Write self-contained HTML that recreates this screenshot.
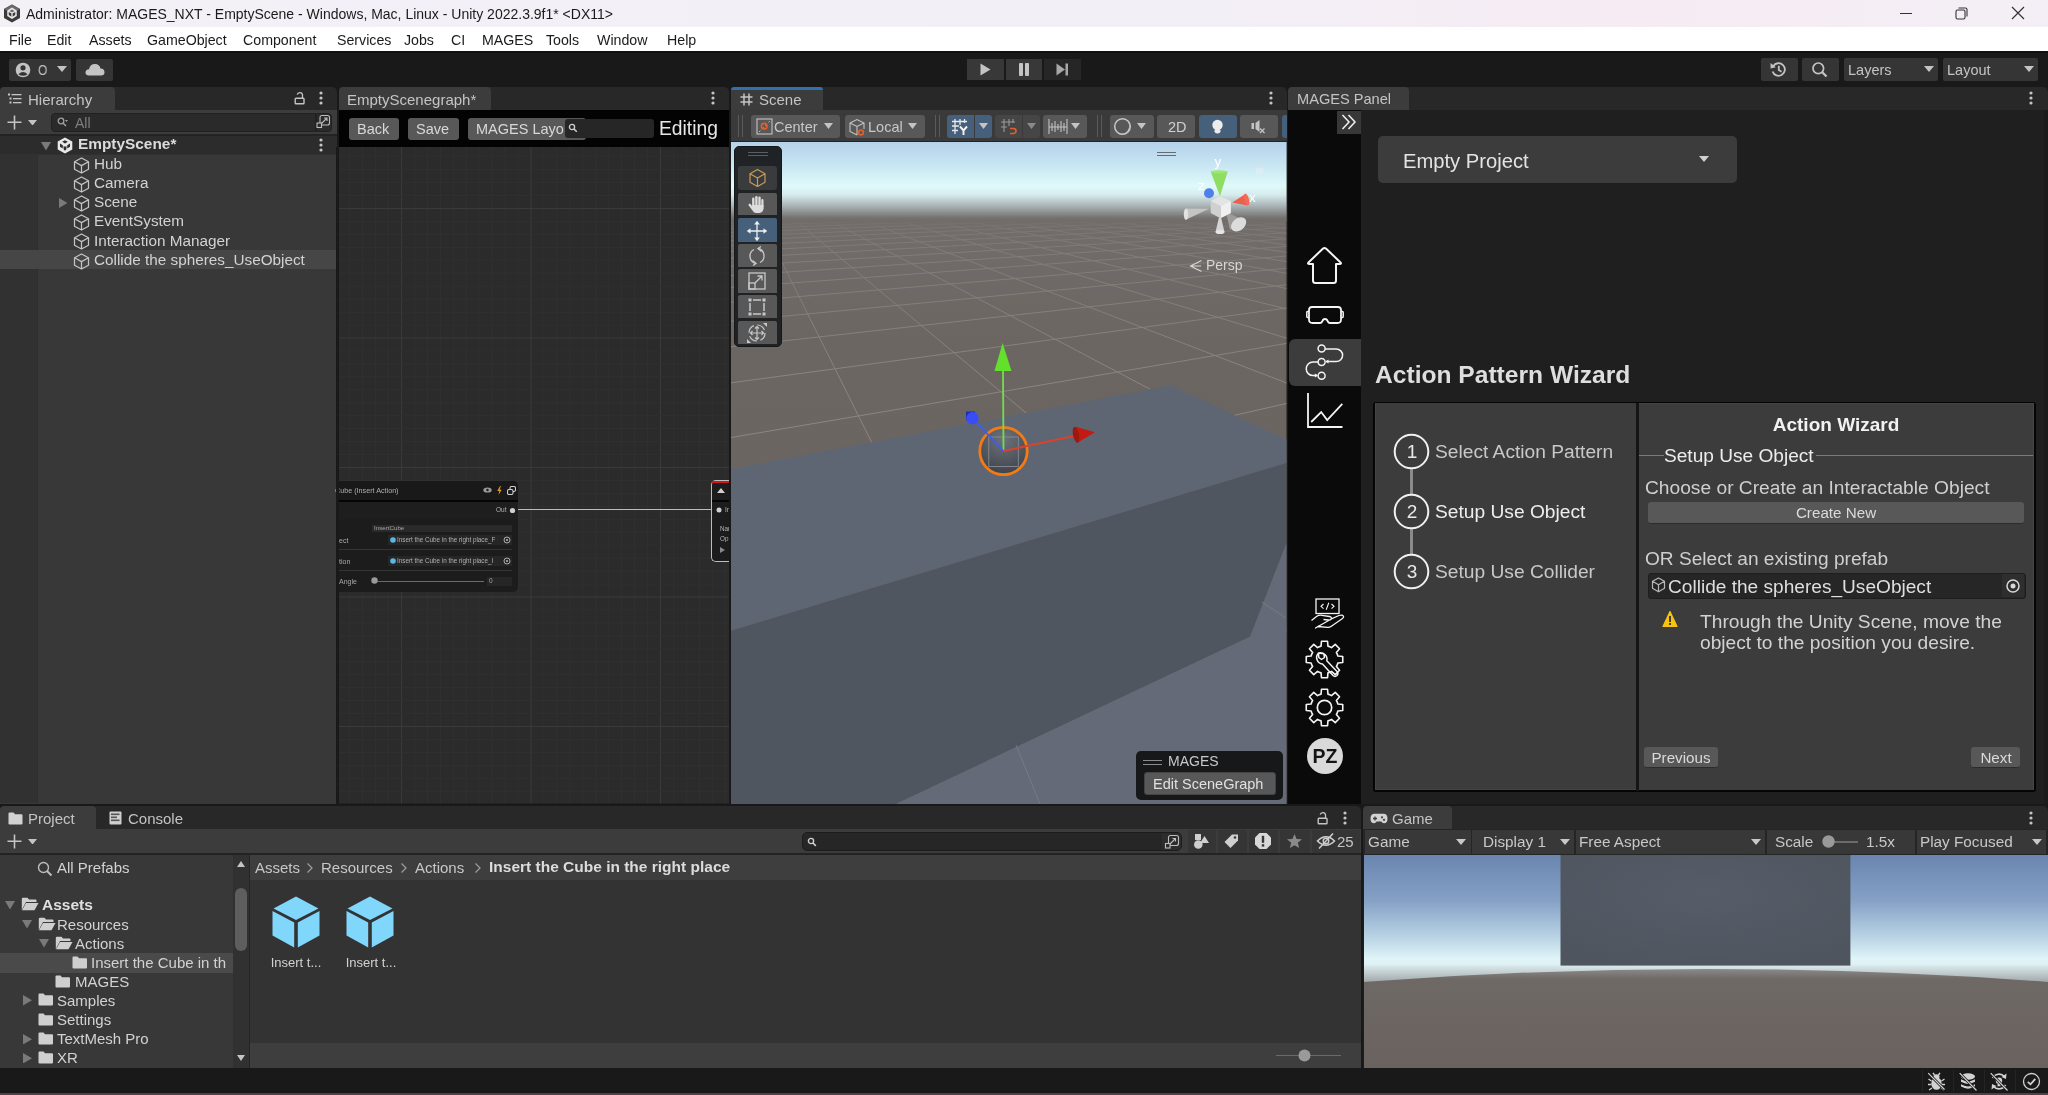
<!DOCTYPE html><html><head><meta charset="utf-8"><style>
html,body{margin:0;padding:0;width:2048px;height:1095px;overflow:hidden;background:#191919;}
body{position:relative;font-family:"Liberation Sans",sans-serif;}
div{position:absolute;box-sizing:border-box;}
.t{white-space:nowrap;line-height:1;will-change:transform;}
</style></head><body>
<div style="left:0;top:0;width:2048px;height:27px;background:linear-gradient(90deg,#f3f0f6 0%,#f3eff6 60%,#f6ebf3 80%,#f4eff6 100%);"></div>
<svg style="position:absolute;left:3px;top:4px;" width="18" height="19" viewBox="0 0 18 19"><polygon points="9,0.5 17,5 17,14 9,18.5 1,14 1,5" fill="#3a3a3a"/><polygon points="9,0.5 17,5 9,9.5 1,5" fill="#6a6a6a"/><path d="M9 4.5 L13 7 L13 11.5 L9 14 L5 11.5 L5 7 Z" fill="none" stroke="#e8e8e8" stroke-width="1.5"/><path d="M9 9 L9 14 M9 9 L13 7 M9 9 L5 7" stroke="#e8e8e8" stroke-width="1.3"/></svg>
<div class="t" style="left:26px;top:7.45px;font-size:14px;color:#1a1a1a;font-weight:400;">Administrator: MAGES_NXT - EmptyScene - Windows, Mac, Linux - Unity 2022.3.9f1* &lt;DX11&gt;</div>
<div style="left:1900px;top:13px;width:12px;height:1px;background:#333;"></div>
<svg style="position:absolute;left:1955px;top:7px;" width="13" height="13" viewBox="0 0 13 13"><rect x="1" y="3" width="9" height="9" rx="1.5" fill="none" stroke="#333" stroke-width="1.1"/><path d="M3.5 1 H10.5 Q12 1 12 2.5 V9.5" fill="none" stroke="#333" stroke-width="1.1"/></svg>
<svg style="position:absolute;left:2011px;top:6px;" width="14" height="14" viewBox="0 0 14 14"><path d="M1 1 L13 13 M13 1 L1 13" stroke="#333" stroke-width="1.2"/></svg>
<div style="left:0px;top:27px;width:2048px;height:24px;background:#ffffff;"></div>
<div class="t" style="left:9px;top:32.78px;font-size:14.2px;color:#1a1a1a;font-weight:400;">File</div>
<div class="t" style="left:47px;top:32.78px;font-size:14.2px;color:#1a1a1a;font-weight:400;">Edit</div>
<div class="t" style="left:89px;top:32.78px;font-size:14.2px;color:#1a1a1a;font-weight:400;">Assets</div>
<div class="t" style="left:147px;top:32.78px;font-size:14.2px;color:#1a1a1a;font-weight:400;">GameObject</div>
<div class="t" style="left:243px;top:32.78px;font-size:14.2px;color:#1a1a1a;font-weight:400;">Component</div>
<div class="t" style="left:337px;top:32.78px;font-size:14.2px;color:#1a1a1a;font-weight:400;">Services</div>
<div class="t" style="left:404px;top:32.78px;font-size:14.2px;color:#1a1a1a;font-weight:400;">Jobs</div>
<div class="t" style="left:451px;top:32.78px;font-size:14.2px;color:#1a1a1a;font-weight:400;">CI</div>
<div class="t" style="left:482px;top:32.78px;font-size:14.2px;color:#1a1a1a;font-weight:400;">MAGES</div>
<div class="t" style="left:546px;top:32.78px;font-size:14.2px;color:#1a1a1a;font-weight:400;">Tools</div>
<div class="t" style="left:597px;top:32.78px;font-size:14.2px;color:#1a1a1a;font-weight:400;">Window</div>
<div class="t" style="left:667px;top:32.78px;font-size:14.2px;color:#1a1a1a;font-weight:400;">Help</div>
<div style="left:0px;top:51px;width:2048px;height:2px;background:#101010;"></div>
<div style="left:0px;top:53px;width:2048px;height:34px;background:#191919;"></div>
<div style="left:9px;top:59px;width:62px;height:22px;background:#353535;border-radius:2px;"></div>
<svg style="position:absolute;left:15px;top:62px;" width="16" height="16" viewBox="0 0 16 16"><circle cx="8" cy="8" r="7.3" fill="#c4c4c4"/><circle cx="8" cy="5.8" r="2.6" fill="#353535"/><path d="M3.4 12.2 Q8 7.8 12.6 12.2 Q8 15.5 3.4 12.2Z" fill="#353535"/></svg>
<div class="t" style="left:38px;top:63.15px;font-size:14px;color:#c4c4c4;font-weight:400;transform:scaleX(0.85);transform-origin:left;">O</div>
<svg style="position:absolute;left:57.0px;top:66.0px;" width="10" height="6" viewBox="0 0 10 6"><polygon points="0,0 10,0 5.0,6" fill="#c4c4c4"/></svg>
<div style="left:76px;top:59px;width:37px;height:22px;background:#353535;border-radius:2px;"></div>
<svg style="position:absolute;left:85px;top:63px;" width="20" height="13" viewBox="0 0 20 13"><path d="M4 12.5 Q0.5 12.5 0.5 9.5 Q0.5 6.5 4 6.3 Q5 1 10 1 Q14.5 1 15.5 5.5 Q19.5 5.8 19.5 9.2 Q19.5 12.5 16 12.5 Z" fill="#c4c4c4"/></svg>
<div style="left:967px;top:59px;width:37px;height:21px;background:#383838;"></div>
<svg style="position:absolute;left:980px;top:63px;" width="11" height="13" viewBox="0 0 11 13"><polygon points="0.5,0.5 10.5,6.5 0.5,12.5" fill="#c4c4c4"/></svg>
<div style="left:1006px;top:59px;width:36px;height:21px;background:#383838;"></div>
<div style="left:1019px;top:63px;width:4px;height:13px;background:#c4c4c4;border-radius:1px;"></div>
<div style="left:1025px;top:63px;width:4px;height:13px;background:#c4c4c4;border-radius:1px;"></div>
<div style="left:1044px;top:59px;width:37px;height:21px;background:#262626;"></div>
<svg style="position:absolute;left:1056px;top:63px;" width="13" height="13" viewBox="0 0 13 13"><polygon points="0.5,0.5 9,6.5 0.5,12.5" fill="#a8a8a8"/><rect x="9.5" y="0.5" width="2.5" height="12" fill="#a8a8a8"/></svg>
<div style="left:1761px;top:58px;width:37px;height:23px;background:#353535;border-radius:2px;"></div>
<svg style="position:absolute;left:1770px;top:61px;" width="17" height="17" viewBox="0 0 17 17"><path d="M3.2 5.2 A6.3 6.3 0 1 1 2.6 10.5" fill="none" stroke="#c4c4c4" stroke-width="1.8"/><polygon points="0.5,2 5.8,6.2 0.6,7.6" fill="#c4c4c4"/><path d="M8.8 4.8 V9 L11.5 10.8" fill="none" stroke="#c4c4c4" stroke-width="1.8"/></svg>
<div style="left:1802px;top:58px;width:37px;height:23px;background:#353535;border-radius:2px;"></div>
<svg style="position:absolute;left:1811px;top:61px;" width="18" height="18" viewBox="0 0 18 18"><circle cx="7.3" cy="7.3" r="5.3" fill="none" stroke="#c4c4c4" stroke-width="1.7"/><path d="M11 11 L15.5 15.5" stroke="#c4c4c4" stroke-width="2.3"/></svg>
<div style="left:1844px;top:58px;width:94px;height:23px;background:#353535;border-radius:2px;"></div>
<div class="t" style="left:1848px;top:62.73px;font-size:14.5px;color:#c4c4c4;font-weight:400;">Layers</div>
<svg style="position:absolute;left:1924.0px;top:66.0px;" width="10" height="6" viewBox="0 0 10 6"><polygon points="0,0 10,0 5.0,6" fill="#c4c4c4"/></svg>
<div style="left:1943px;top:58px;width:95px;height:23px;background:#353535;border-radius:2px;"></div>
<div class="t" style="left:1947px;top:62.73px;font-size:14.5px;color:#c4c4c4;font-weight:400;">Layout</div>
<svg style="position:absolute;left:2024.0px;top:66.0px;" width="10" height="6" viewBox="0 0 10 6"><polygon points="0,0 10,0 5.0,6" fill="#c4c4c4"/></svg>
<div style="left:0px;top:1068px;width:2048px;height:25px;background:#191919;"></div>
<div style="left:0px;top:1093px;width:2048px;height:2px;background:#4c4247;"></div>
<div style="left:0px;top:87px;width:337px;height:23px;background:#282828;border-radius:5px 5px 0 0;"></div>
<div style="left:0px;top:87px;width:115px;height:23px;background:#3c3c3c;border-radius:4px 4px 0 0;"></div>
<svg style="position:absolute;left:8px;top:93px;" width="14" height="12" viewBox="0 0 14 12"><rect x="0" y="0.5" width="2" height="2" fill="#c4c4c4"/><rect x="3.5" y="1" width="10" height="1.3" fill="#c4c4c4"/><rect x="1.5" y="4.5" width="2" height="2" fill="#c4c4c4"/><rect x="5" y="5" width="8.5" height="1.3" fill="#c4c4c4"/><rect x="1.5" y="8.5" width="2" height="2" fill="#c4c4c4"/><rect x="5" y="9" width="8.5" height="1.3" fill="#c4c4c4"/></svg>
<div class="t" style="left:27.5px;top:91.90px;font-size:15px;color:#c4c4c4;font-weight:400;">Hierarchy</div>
<svg style="position:absolute;left:294px;top:91px;" width="12" height="14" viewBox="0 0 12 14"><path d="M8.5 7 V4 A2.7 2.7 0 0 0 3.2 3.6" fill="none" stroke="#c4c4c4" stroke-width="1.3"/><rect x="1.2" y="7.2" width="8.8" height="5.6" rx="0.8" fill="none" stroke="#c4c4c4" stroke-width="1.4"/></svg>
<svg style="position:absolute;left:318px;top:91px;" width="6" height="14" viewBox="0 0 6 14"><circle cx="3" cy="2" r="1.6" fill="#c4c4c4"/><circle cx="3" cy="7" r="1.6" fill="#c4c4c4"/><circle cx="3" cy="12" r="1.6" fill="#c4c4c4"/></svg>
<div style="left:0px;top:110px;width:337px;height:24px;background:#3c3c3c;"></div>
<svg style="position:absolute;left:7px;top:115px;" width="16" height="15" viewBox="0 0 16 15"><path d="M7.5 0.5 V14.5 M0.5 7.2 H14.5" stroke="#c4c4c4" stroke-width="1.6"/></svg>
<svg style="position:absolute;left:27.5px;top:119.75px;" width="9" height="5.5" viewBox="0 0 9 5.5"><polygon points="0,0 9,0 4.5,5.5" fill="#c4c4c4"/></svg>
<div style="left:51px;top:113px;width:265px;height:19px;background:#2a2a2a;border-radius:4px 0 0 4px;border:1px solid #212121;"></div>
<div style="left:316px;top:113px;width:16px;height:19px;background:#2a2a2a;border-radius:0 4px 4px 0;border:1px solid #212121;"></div>
<svg style="position:absolute;left:57px;top:117px;" width="11" height="11" viewBox="0 0 11 11"><circle cx="4" cy="4" r="2.8" fill="none" stroke="#a0a0a0" stroke-width="1.3"/><path d="M6 6 L9 9" stroke="#a0a0a0" stroke-width="1.5"/><polygon points="8,3 11,3 9.5,5" fill="#a0a0a0"/></svg>
<div class="t" style="left:75px;top:115.75px;font-size:14px;color:#7f7f7f;font-weight:400;">All</div>
<svg style="position:absolute;left:316px;top:114px;" width="15" height="15" viewBox="0 0 15 15"><rect x="4" y="1.5" width="9.5" height="9.5" rx="2" fill="none" stroke="#bdbdbd" stroke-width="1.1"/><path d="M5 10 L11 4 M8 4 H11 V7" fill="none" stroke="#bdbdbd" stroke-width="1.1"/><rect x="1" y="9" width="4.5" height="4.5" fill="#2a2a2a" stroke="#bdbdbd" stroke-width="1.1"/></svg>
<div style="left:0px;top:134px;width:337px;height:1.5px;background:#232323;"></div>
<div style="left:0px;top:135.5px;width:337px;height:668px;background:#383838;"></div>
<div style="left:0px;top:154.2px;width:37.5px;height:649.3px;background:#313131;"></div>
<div style="left:37px;top:154.2px;width:1.2px;height:649.3px;background:#2e2e2e;"></div>
<div style="left:0px;top:135.5px;width:337px;height:19px;background:#2c2c2c;"></div>
<div style="left:0px;top:154px;width:337px;height:0.8px;background:#303030;"></div>
<svg style="position:absolute;left:40.7px;top:141.75px;" width="10" height="8.5" viewBox="0 0 10 8.5"><polygon points="0,0 10,0 5.0,8.5" fill="#7a7a7a"/></svg>
<svg style="position:absolute;left:57px;top:137px;" width="16" height="17" viewBox="0 0 16 17"><path d="M8 0.5 L15.3 4.6 V12.4 L8 16.5 L0.7 12.4 V4.6 Z" fill="#e8e8e8"/><path d="M8 3.2 L5.2 4.8 L8 6.4 L10.8 4.8 Z M3 6.6 V9.8 L5.8 11.4 V8.2 Z M13 6.6 V9.8 L10.2 11.4 V8.2 Z M6.6 12.2 L8 13.8 L9.4 12.2 V9 L8 9.8 L6.6 9 Z" fill="#2c2c2c"/></svg>
<div class="t" style="left:77.8px;top:136.26px;font-size:15.4px;color:#dcdcdc;font-weight:700;">EmptyScene*</div>
<svg style="position:absolute;left:318px;top:138px;" width="6" height="14" viewBox="0 0 6 14"><circle cx="3" cy="2" r="1.6" fill="#c4c4c4"/><circle cx="3" cy="7" r="1.6" fill="#c4c4c4"/><circle cx="3" cy="12" r="1.6" fill="#c4c4c4"/></svg>
<svg style="position:absolute;left:72.5px;top:156.5px;" width="17" height="17" viewBox="0 0 17 17"><path d="M8.5 1 L15.5 4.8 V12.2 L8.5 16 L1.5 12.2 V4.8 Z M1.5 4.8 L8.5 8.6 L15.5 4.8 M8.5 8.6 V16" fill="none" stroke="#c4c4c4" stroke-width="1.25" stroke-linejoin="round"/></svg>
<div class="t" style="left:93.8px;top:155.85px;font-size:15.3px;color:#d2d2d2;font-weight:400;">Hub</div>
<svg style="position:absolute;left:72.5px;top:175.7px;" width="17" height="17" viewBox="0 0 17 17"><path d="M8.5 1 L15.5 4.8 V12.2 L8.5 16 L1.5 12.2 V4.8 Z M1.5 4.8 L8.5 8.6 L15.5 4.8 M8.5 8.6 V16" fill="none" stroke="#c4c4c4" stroke-width="1.25" stroke-linejoin="round"/></svg>
<div class="t" style="left:93.8px;top:175.05px;font-size:15.3px;color:#d2d2d2;font-weight:400;">Camera</div>
<svg style="position:absolute;left:72.5px;top:194.9px;" width="17" height="17" viewBox="0 0 17 17"><path d="M8.5 1 L15.5 4.8 V12.2 L8.5 16 L1.5 12.2 V4.8 Z M1.5 4.8 L8.5 8.6 L15.5 4.8 M8.5 8.6 V16" fill="none" stroke="#c4c4c4" stroke-width="1.25" stroke-linejoin="round"/></svg>
<div class="t" style="left:93.8px;top:194.25px;font-size:15.3px;color:#d2d2d2;font-weight:400;">Scene</div>
<svg style="position:absolute;left:72.5px;top:214.1px;" width="17" height="17" viewBox="0 0 17 17"><path d="M8.5 1 L15.5 4.8 V12.2 L8.5 16 L1.5 12.2 V4.8 Z M1.5 4.8 L8.5 8.6 L15.5 4.8 M8.5 8.6 V16" fill="none" stroke="#c4c4c4" stroke-width="1.25" stroke-linejoin="round"/></svg>
<div class="t" style="left:93.8px;top:213.45px;font-size:15.3px;color:#d2d2d2;font-weight:400;">EventSystem</div>
<svg style="position:absolute;left:72.5px;top:233.3px;" width="17" height="17" viewBox="0 0 17 17"><path d="M8.5 1 L15.5 4.8 V12.2 L8.5 16 L1.5 12.2 V4.8 Z M1.5 4.8 L8.5 8.6 L15.5 4.8 M8.5 8.6 V16" fill="none" stroke="#c4c4c4" stroke-width="1.25" stroke-linejoin="round"/></svg>
<div class="t" style="left:93.8px;top:232.65px;font-size:15.3px;color:#d2d2d2;font-weight:400;">Interaction Manager</div>
<div style="left:0px;top:250.2px;width:337px;height:19.2px;background:#464646;"></div>
<svg style="position:absolute;left:72.5px;top:252.5px;" width="17" height="17" viewBox="0 0 17 17"><path d="M8.5 1 L15.5 4.8 V12.2 L8.5 16 L1.5 12.2 V4.8 Z M1.5 4.8 L8.5 8.6 L15.5 4.8 M8.5 8.6 V16" fill="none" stroke="#c4c4c4" stroke-width="1.25" stroke-linejoin="round"/></svg>
<div class="t" style="left:93.8px;top:251.85px;font-size:15.3px;color:#d2d2d2;font-weight:400;">Collide the spheres_UseObject</div>
<svg style="position:absolute;left:58.75px;top:197.8px;" width="8.5" height="10" viewBox="0 0 8.5 10"><polygon points="0,0 8.5,5.0 0,10" fill="#7a7a7a"/></svg>
<div style="left:337px;top:87px;width:2px;height:717px;background:#191919;"></div>
<div style="left:339px;top:87px;width:390px;height:23px;background:#282828;border-radius:5px 5px 0 0;"></div>
<div style="left:339px;top:87px;width:152px;height:23px;background:#3c3c3c;border-radius:4px 4px 0 0;"></div>
<div class="t" style="left:347px;top:91.90px;font-size:15px;color:#c4c4c4;font-weight:400;">EmptyScenegraph*</div>
<svg style="position:absolute;left:710px;top:91px;" width="6" height="14" viewBox="0 0 6 14"><circle cx="3" cy="2" r="1.6" fill="#c4c4c4"/><circle cx="3" cy="7" r="1.6" fill="#c4c4c4"/><circle cx="3" cy="12" r="1.6" fill="#c4c4c4"/></svg>
<div style="left:339px;top:110px;width:390px;height:37px;background:#030303;"></div>
<div style="left:349px;top:117.5px;width:50px;height:22.5px;background:#585858;border-radius:3px;"></div>
<div class="t" style="left:357px;top:121.73px;font-size:14.5px;color:#d8d8d8;font-weight:400;">Back</div>
<div style="left:407.5px;top:117.5px;width:51px;height:22.5px;background:#585858;border-radius:3px;"></div>
<div class="t" style="left:416px;top:121.73px;font-size:14.5px;color:#d8d8d8;font-weight:400;">Save</div>
<div style="left:468px;top:117.5px;width:118px;height:22.5px;background:#585858;border-radius:3px;"></div>
<div class="t" style="left:476px;top:121.73px;font-size:14.5px;color:#d8d8d8;font-weight:400;">MAGES Layo</div>
<div style="left:564.5px;top:119px;width:89.5px;height:19px;background:#262626;border-radius:3px;"></div>
<svg style="position:absolute;left:568px;top:123px;" width="10" height="10" viewBox="0 0 10 10"><circle cx="4" cy="4" r="2.6" fill="none" stroke="#cfcfcf" stroke-width="1.3"/><path d="M6 6 L8.8 8.8" stroke="#cfcfcf" stroke-width="1.6"/></svg>
<div class="t" style="left:659px;top:118.86px;font-size:19.3px;color:#e6e6e6;font-weight:400;">Editing</div>
<svg style="position:absolute;left:339px;top:147px;" width="390" height="656.5" viewBox="0 0 390 656.5"><rect width="390" height="656.5" fill="#2b2b2b"/><rect x="10.20" y="0" width="1" height="656.5" fill="#303030"/><rect x="23.15" y="0" width="1" height="656.5" fill="#303030"/><rect x="36.10" y="0" width="1" height="656.5" fill="#303030"/><rect x="49.05" y="0" width="1" height="656.5" fill="#303030"/><rect x="62.00" y="0" width="1" height="656.5" fill="#3a3a3a"/><rect x="74.95" y="0" width="1" height="656.5" fill="#303030"/><rect x="87.90" y="0" width="1" height="656.5" fill="#303030"/><rect x="100.85" y="0" width="1" height="656.5" fill="#303030"/><rect x="113.80" y="0" width="1" height="656.5" fill="#303030"/><rect x="126.75" y="0" width="1" height="656.5" fill="#303030"/><rect x="139.70" y="0" width="1" height="656.5" fill="#303030"/><rect x="152.65" y="0" width="1" height="656.5" fill="#303030"/><rect x="165.60" y="0" width="1" height="656.5" fill="#303030"/><rect x="178.55" y="0" width="1" height="656.5" fill="#303030"/><rect x="191.50" y="0" width="1" height="656.5" fill="#3a3a3a"/><rect x="204.45" y="0" width="1" height="656.5" fill="#303030"/><rect x="217.40" y="0" width="1" height="656.5" fill="#303030"/><rect x="230.35" y="0" width="1" height="656.5" fill="#303030"/><rect x="243.30" y="0" width="1" height="656.5" fill="#303030"/><rect x="256.25" y="0" width="1" height="656.5" fill="#303030"/><rect x="269.20" y="0" width="1" height="656.5" fill="#303030"/><rect x="282.15" y="0" width="1" height="656.5" fill="#303030"/><rect x="295.10" y="0" width="1" height="656.5" fill="#303030"/><rect x="308.05" y="0" width="1" height="656.5" fill="#303030"/><rect x="321.00" y="0" width="1" height="656.5" fill="#3a3a3a"/><rect x="333.95" y="0" width="1" height="656.5" fill="#303030"/><rect x="346.90" y="0" width="1" height="656.5" fill="#303030"/><rect x="359.85" y="0" width="1" height="656.5" fill="#303030"/><rect x="372.80" y="0" width="1" height="656.5" fill="#303030"/><rect x="385.75" y="0" width="1" height="656.5" fill="#303030"/><rect x="0" y="9.20" width="390" height="1" fill="#303030"/><rect x="0" y="22.15" width="390" height="1" fill="#303030"/><rect x="0" y="35.10" width="390" height="1" fill="#303030"/><rect x="0" y="48.05" width="390" height="1" fill="#303030"/><rect x="0" y="61.00" width="390" height="1" fill="#3a3a3a"/><rect x="0" y="73.95" width="390" height="1" fill="#303030"/><rect x="0" y="86.90" width="390" height="1" fill="#303030"/><rect x="0" y="99.85" width="390" height="1" fill="#303030"/><rect x="0" y="112.80" width="390" height="1" fill="#303030"/><rect x="0" y="125.75" width="390" height="1" fill="#303030"/><rect x="0" y="138.70" width="390" height="1" fill="#303030"/><rect x="0" y="151.65" width="390" height="1" fill="#303030"/><rect x="0" y="164.60" width="390" height="1" fill="#303030"/><rect x="0" y="177.55" width="390" height="1" fill="#303030"/><rect x="0" y="190.50" width="390" height="1" fill="#3a3a3a"/><rect x="0" y="203.45" width="390" height="1" fill="#303030"/><rect x="0" y="216.40" width="390" height="1" fill="#303030"/><rect x="0" y="229.35" width="390" height="1" fill="#303030"/><rect x="0" y="242.30" width="390" height="1" fill="#303030"/><rect x="0" y="255.25" width="390" height="1" fill="#303030"/><rect x="0" y="268.20" width="390" height="1" fill="#303030"/><rect x="0" y="281.15" width="390" height="1" fill="#303030"/><rect x="0" y="294.10" width="390" height="1" fill="#303030"/><rect x="0" y="307.05" width="390" height="1" fill="#303030"/><rect x="0" y="320.00" width="390" height="1" fill="#3a3a3a"/><rect x="0" y="332.95" width="390" height="1" fill="#303030"/><rect x="0" y="345.90" width="390" height="1" fill="#303030"/><rect x="0" y="358.85" width="390" height="1" fill="#303030"/><rect x="0" y="371.80" width="390" height="1" fill="#303030"/><rect x="0" y="384.75" width="390" height="1" fill="#303030"/><rect x="0" y="397.70" width="390" height="1" fill="#303030"/><rect x="0" y="410.65" width="390" height="1" fill="#303030"/><rect x="0" y="423.60" width="390" height="1" fill="#303030"/><rect x="0" y="436.55" width="390" height="1" fill="#303030"/><rect x="0" y="449.50" width="390" height="1" fill="#3a3a3a"/><rect x="0" y="462.45" width="390" height="1" fill="#303030"/><rect x="0" y="475.40" width="390" height="1" fill="#303030"/><rect x="0" y="488.35" width="390" height="1" fill="#303030"/><rect x="0" y="501.30" width="390" height="1" fill="#303030"/><rect x="0" y="514.25" width="390" height="1" fill="#303030"/><rect x="0" y="527.20" width="390" height="1" fill="#303030"/><rect x="0" y="540.15" width="390" height="1" fill="#303030"/><rect x="0" y="553.10" width="390" height="1" fill="#303030"/><rect x="0" y="566.05" width="390" height="1" fill="#303030"/><rect x="0" y="579.00" width="390" height="1" fill="#3a3a3a"/><rect x="0" y="591.95" width="390" height="1" fill="#303030"/><rect x="0" y="604.90" width="390" height="1" fill="#303030"/><rect x="0" y="617.85" width="390" height="1" fill="#303030"/><rect x="0" y="630.80" width="390" height="1" fill="#303030"/><rect x="0" y="643.75" width="390" height="1" fill="#303030"/></svg>
<div style="left:339px;top:480.7px;width:179px;height:111px;background:#1c1c1c;border-radius:0 5px 5px 0;"></div>
<div style="left:339px;top:480.7px;width:179px;height:19px;background:#191919;border-radius:0 5px 0 0;"></div>
<div style="left:339px;top:499.5px;width:179px;height:2px;background:#050505;"></div>
<div style="left:339px;top:501.5px;width:179px;height:17.5px;background:#1e1e1e;"></div>
<div class="t" style="left:339px;top:486.61px;font-size:7.2px;color:#b0b0b0;font-weight:400;margin-left:-4px;">Cube (Insert Action)</div>
<svg style="position:absolute;left:483px;top:487px;" width="9" height="6" viewBox="0 0 9 6"><ellipse cx="4.5" cy="3" rx="4.2" ry="2.6" fill="#9a9a9a"/><circle cx="4.5" cy="3" r="1.2" fill="#1c1c1c"/></svg>
<svg style="position:absolute;left:496.5px;top:485.5px;" width="5" height="9" viewBox="0 0 5 9"><polygon points="3,0 0.3,5 2.3,5 1.5,9 4.7,3.8 2.7,3.8 3.8,0" fill="#e59a23"/></svg>
<svg style="position:absolute;left:507px;top:485.5px;" width="9" height="9" viewBox="0 0 9 9"><rect x="3" y="0.5" width="5.5" height="5" rx="1.5" fill="none" stroke="#cfcfcf" stroke-width="1.1"/><rect x="0.5" y="3.5" width="5.5" height="5" rx="1.5" fill="#1c1c1c" stroke="#cfcfcf" stroke-width="1.1"/></svg>
<div class="t" style="left:496px;top:506.70px;font-size:6.5px;color:#b5b5b5;font-weight:400;">Out</div>
<svg style="position:absolute;left:508.5px;top:506.5px;" width="7" height="7" viewBox="0 0 7 7"><circle cx="3.5" cy="3.5" r="2.6" fill="#cfcfcf"/></svg>
<div style="left:518px;top:508.7px;width:194px;height:1.8px;background:#bdbdbd;"></div>
<div style="left:372px;top:524.7px;width:140px;height:7.5px;background:#2a2a2a;"></div>
<div class="t" style="left:374px;top:524.95px;font-size:6.2px;color:#a8a8a8;font-weight:400;">InsertCube</div>
<div style="left:388px;top:535px;width:124px;height:9.5px;background:#262626;"></div>
<svg style="position:absolute;left:389.5px;top:536.8px;" width="6" height="6" viewBox="0 0 6 6"><circle cx="3" cy="3" r="2.8" fill="#56b8e6"/></svg>
<div class="t" style="left:396.5px;top:536.97px;font-size:6.3px;color:#b0b0b0;font-weight:400;width:105px;height:9px;overflow:hidden;">Insert the Cube in the right place_F</div>
<svg style="position:absolute;left:502.5px;top:536px;" width="8" height="8" viewBox="0 0 8 8"><circle cx="4" cy="4" r="3" fill="none" stroke="#bbb" stroke-width="0.9"/><circle cx="4" cy="4" r="1" fill="#bbb"/></svg>
<div class="t" style="left:339px;top:536.57px;font-size:7px;color:#a8a8a8;font-weight:400;">ect</div>
<div style="left:388px;top:556px;width:124px;height:9.5px;background:#262626;"></div>
<svg style="position:absolute;left:389.5px;top:557.8px;" width="6" height="6" viewBox="0 0 6 6"><circle cx="3" cy="3" r="2.8" fill="#56b8e6"/></svg>
<div class="t" style="left:396.5px;top:557.97px;font-size:6.3px;color:#b0b0b0;font-weight:400;width:105px;height:9px;overflow:hidden;">Insert the Cube in the right place_I</div>
<svg style="position:absolute;left:502.5px;top:557px;" width="8" height="8" viewBox="0 0 8 8"><circle cx="4" cy="4" r="3" fill="none" stroke="#bbb" stroke-width="0.9"/><circle cx="4" cy="4" r="1" fill="#bbb"/></svg>
<div class="t" style="left:339px;top:557.57px;font-size:7px;color:#a8a8a8;font-weight:400;">tion</div>
<div style="left:339px;top:549px;width:173px;height:1.2px;background:#343434;"></div>
<div style="left:339px;top:569.5px;width:173px;height:1.2px;background:#343434;"></div>
<div class="t" style="left:339px;top:577.57px;font-size:7px;color:#a8a8a8;font-weight:400;">Angle</div>
<div style="left:375px;top:580.5px;width:109px;height:1.3px;background:#6a6a6a;"></div>
<svg style="position:absolute;left:370.5px;top:577px;" width="7" height="7" viewBox="0 0 7 7"><circle cx="3.5" cy="3.5" r="3.2" fill="#9a9a9a"/></svg>
<div style="left:487px;top:577.2px;width:25px;height:8.6px;background:#262626;"></div>
<div class="t" style="left:489px;top:578.10px;font-size:6.5px;color:#a8a8a8;font-weight:400;">0</div>
<div style="left:711.2px;top:479.5px;width:20px;height:82px;background:#1c1c1c;border:1.1px solid #bdbdbd;border-right:none;border-radius:5px 0 0 5px;"></div>
<div style="left:712.2px;top:480.5px;width:17px;height:2.2px;background:#d01818;"></div>
<div style="left:712.2px;top:499.5px;width:17px;height:2px;background:#050505;"></div>
<svg style="position:absolute;left:716.5px;top:488px;" width="8" height="5" viewBox="0 0 8 5"><polygon points="0,5 4,0 8,5" fill="#cfcfcf"/></svg>
<svg style="position:absolute;left:716.3px;top:507px;" width="6" height="6" viewBox="0 0 6 6"><circle cx="3" cy="3" r="2.5" fill="#cfcfcf"/></svg>
<div class="t" style="left:724.5px;top:507.00px;font-size:6.5px;color:#b5b5b5;font-weight:400;width:4.5px;overflow:hidden;">Ir</div>
<div class="t" style="left:720px;top:525.67px;font-size:6.3px;color:#b5b5b5;font-weight:400;width:9px;overflow:hidden;">Nar</div>
<div class="t" style="left:720px;top:536.17px;font-size:6.3px;color:#b5b5b5;font-weight:400;width:9px;overflow:hidden;">Op</div>
<svg style="position:absolute;left:720px;top:546.5px;" width="5" height="6" viewBox="0 0 5 6"><polygon points="0,0 5,3 0,6" fill="#8a8a8a"/></svg>
<div style="left:336px;top:147px;width:3px;height:657px;background:#191919;"></div>
<div style="left:729px;top:87px;width:2px;height:717px;background:#191919;"></div>
<div style="left:731px;top:87px;width:555.5px;height:23px;background:#282828;border-radius:5px 5px 0 0;"></div>
<div style="left:731px;top:87px;width:92px;height:23px;background:#3c3c3c;border-radius:4px 4px 0 0;"></div>
<div style="left:731px;top:87px;width:92px;height:3px;background:#3270ad;border-radius:4px 4px 0 0;"></div>
<svg style="position:absolute;left:740px;top:93px;" width="13" height="13" viewBox="0 0 13 13"><path d="M4 0.5 V12.5 M9 0.5 V12.5 M0.5 4 H12.5 M0.5 9 H12.5" stroke="#c4c4c4" stroke-width="1.5"/></svg>
<div class="t" style="left:759px;top:91.90px;font-size:15px;color:#c4c4c4;font-weight:400;">Scene</div>
<svg style="position:absolute;left:1267.5px;top:91px;" width="6" height="14" viewBox="0 0 6 14"><circle cx="3" cy="2" r="1.6" fill="#c4c4c4"/><circle cx="3" cy="7" r="1.6" fill="#c4c4c4"/><circle cx="3" cy="12" r="1.6" fill="#c4c4c4"/></svg>
<div style="left:731px;top:110px;width:555.5px;height:32px;background:#3a3a3a;"></div>
<div style="left:731px;top:141px;width:555.5px;height:1.2px;background:#232323;"></div>
<div style="left:738px;top:115px;width:1px;height:22px;background:#5a5a5a;"></div>
<div style="left:742px;top:115px;width:1px;height:22px;background:#5a5a5a;"></div>
<div style="left:750.5px;top:114.5px;width:89.5px;height:23.5px;background:#585858;border-radius:3px;"></div>
<svg style="position:absolute;left:756px;top:118px;" width="17" height="17" viewBox="0 0 17 17"><rect x="1" y="1" width="15" height="15" fill="none" stroke="#c4c4c4" stroke-width="1.1"/><path d="M3 14 L14 3" stroke="#c4c4c4" stroke-width="0.9" stroke-dasharray="2 2.5"/><circle cx="8.2" cy="8.2" r="2.8" fill="none" stroke="#e06030" stroke-width="1.6"/></svg>
<div class="t" style="left:774px;top:120.23px;font-size:14.5px;color:#c8c8c8;font-weight:400;">Center</div>
<svg style="position:absolute;left:823.5px;top:122.5px;" width="9" height="6" viewBox="0 0 9 6"><polygon points="0,0 9,0 4.5,6" fill="#c4c4c4"/></svg>
<div style="left:844.5px;top:114.5px;width:80px;height:23.5px;background:#585858;border-radius:3px;"></div>
<svg style="position:absolute;left:848px;top:117.5px;" width="19" height="19" viewBox="0 0 19 19"><path d="M2 5 L9 1.5 L16 5 V11 M2 5 V13.5 L9 17 M2 5 L9 8.5 L16 5 M9 8.5 V17" fill="none" stroke="#c4c4c4" stroke-width="1.1"/><circle cx="13" cy="14.5" r="2.4" fill="none" stroke="#e06030" stroke-width="1.6"/></svg>
<div class="t" style="left:868px;top:120.23px;font-size:14.5px;color:#c8c8c8;font-weight:400;">Local</div>
<svg style="position:absolute;left:907.5px;top:122.5px;" width="9" height="6" viewBox="0 0 9 6"><polygon points="0,0 9,0 4.5,6" fill="#c4c4c4"/></svg>
<div style="left:935px;top:115px;width:1px;height:22px;background:#5a5a5a;"></div>
<div style="left:939px;top:115px;width:1px;height:22px;background:#5a5a5a;"></div>
<div style="left:947px;top:114.5px;width:26.5px;height:23.5px;background:#46607c;border-radius:3px 0 0 3px;"></div>
<div style="left:975px;top:114.5px;width:17px;height:23.5px;background:#46607c;border-radius:0 3px 3px 0;"></div>
<svg style="position:absolute;left:951px;top:118px;" width="18" height="18" viewBox="0 0 18 18"><path d="M4 1 V16 M9 1 V7 M13.5 1 V5 M1 3.5 H16 M1 8 H8 M1 12.5 H7" stroke="#e8e8e8" stroke-width="1.3"/><path d="M9 8.5 L12.5 12.5 L16 8.5 M12.5 12.5 V17" fill="none" stroke="#f4f4f4" stroke-width="1.9"/></svg>
<svg style="position:absolute;left:979.0px;top:122.5px;" width="9" height="6" viewBox="0 0 9 6"><polygon points="0,0 9,0 4.5,6" fill="#c4c4c4"/></svg>
<div style="left:995px;top:114.5px;width:26.5px;height:23.5px;background:#464646;border-radius:3px 0 0 3px;"></div>
<div style="left:1022.5px;top:114.5px;width:17.5px;height:23.5px;background:#464646;border-radius:0 3px 3px 0;"></div>
<svg style="position:absolute;left:1000px;top:118px;" width="17" height="17" viewBox="0 0 17 17"><path d="M4 1 V14 M9 1 V8 M13 1 V5 M1 4 H15 M1 9 H7" stroke="#9a9a9a" stroke-width="1.1"/><path d="M10 10.5 H13.5 A2.5 2.5 0 0 1 13.5 15.5 H10" fill="none" stroke="#e06030" stroke-width="1.7"/></svg>
<svg style="position:absolute;left:1026.5px;top:122.5px;" width="9" height="6" viewBox="0 0 9 6"><polygon points="0,0 9,0 4.5,6" fill="#8a8a8a"/></svg>
<div style="left:1043px;top:114.5px;width:44px;height:23.5px;background:#585858;border-radius:3px;"></div>
<svg style="position:absolute;left:1048px;top:118px;" width="20" height="17" viewBox="0 0 20 17"><path d="M1 1 V16 M19 1 V16 M4 5 V13 M7 3 V14 M10 6 V12 M13 3 V14 M16 5 V13 M1 9 H19" stroke="#c4c4c4" stroke-width="1.1"/></svg>
<svg style="position:absolute;left:1070.5px;top:122.5px;" width="9" height="6" viewBox="0 0 9 6"><polygon points="0,0 9,0 4.5,6" fill="#c4c4c4"/></svg>
<div style="left:1097px;top:115px;width:1px;height:22px;background:#5a5a5a;"></div>
<div style="left:1101px;top:115px;width:1px;height:22px;background:#5a5a5a;"></div>
<div style="left:1110px;top:114.5px;width:43.5px;height:23.5px;background:#585858;border-radius:3px;"></div>
<svg style="position:absolute;left:1113px;top:117px;" width="19" height="19" viewBox="0 0 19 19"><circle cx="9.5" cy="9.5" r="7.8" fill="none" stroke="#c8c8c8" stroke-width="1.5"/><path d="M13.5 3 A7.8 7.8 0 0 1 4 15.8 A8 8 0 0 0 13.5 3 Z" fill="#c8c8c8"/></svg>
<svg style="position:absolute;left:1136.5px;top:122.5px;" width="9" height="6" viewBox="0 0 9 6"><polygon points="0,0 9,0 4.5,6" fill="#c4c4c4"/></svg>
<div style="left:1157px;top:114.5px;width:38px;height:23.5px;background:#585858;border-radius:3px;"></div>
<div class="t" style="left:1167.5px;top:120.23px;font-size:14.5px;color:#d0d0d0;font-weight:400;">2D</div>
<div style="left:1198.5px;top:114.5px;width:38.2px;height:23.5px;background:#46607c;border-radius:3px;"></div>
<svg style="position:absolute;left:1209px;top:118px;" width="17" height="18" viewBox="0 0 17 18"><circle cx="8.5" cy="7" r="5.2" fill="#ececec"/><path d="M5.5 12 H11.5 V14 Q8.5 17 5.5 14Z" fill="#ececec"/></svg>
<div style="left:1240px;top:114.5px;width:38px;height:23.5px;background:#585858;border-radius:3px;"></div>
<svg style="position:absolute;left:1251px;top:119px;" width="15" height="15" viewBox="0 0 15 15"><rect x="0.5" y="4" width="2.5" height="6" fill="#c4c4c4"/><path d="M4.5 4 L8.5 1 V13 L4.5 10 Z" fill="#c4c4c4"/><path d="M9 9.5 L13.5 14 M13.5 9.5 L9 14" stroke="#c4c4c4" stroke-width="1.3"/></svg>
<div style="left:1281.5px;top:114.5px;width:5px;height:23.5px;background:#46607c;border-radius:3px 0 0 3px;"></div>
<svg style="position:absolute;left:731px;top:142px;" width="555.5" height="661.5" viewBox="0 0 555.5 661.5"><defs>
<linearGradient id="sky" x1="0" y1="0" x2="0" y2="1">
<stop offset="0" stop-color="#b4d2ea"/><stop offset="0.3" stop-color="#c9e6f3"/><stop offset="0.55" stop-color="#e0fafb"/><stop offset="0.66" stop-color="#d6ebec"/><stop offset="0.8" stop-color="#a9b3b5"/><stop offset="0.95" stop-color="#74706e"/><stop offset="1" stop-color="#706b68"/></linearGradient>
<linearGradient id="gfade" x1="0" y1="0" x2="0" y2="661.5" gradientUnits="userSpaceOnUse">
<stop offset="0.118" stop-color="#fff" stop-opacity="0"/><stop offset="0.130" stop-color="#fff" stop-opacity="0.35"/><stop offset="0.166" stop-color="#fff" stop-opacity="0.55"/><stop offset="0.348" stop-color="#fff" stop-opacity="0.85"/><stop offset="0.574" stop-color="#fff" stop-opacity="1"/></linearGradient>
<mask id="gm"><rect width="555.5" height="661.5" fill="url(#gfade)"/></mask>
</defs>
<linearGradient id="gnd" x1="0" y1="0" x2="0" y2="661.5" gradientUnits="userSpaceOnUse"><stop offset="0.121" stop-color="#726d6a"/><stop offset="0.302" stop-color="#6b6662"/><stop offset="1" stop-color="#6a6460"/></linearGradient><rect width="555.5" height="661.5" fill="url(#gnd)"/>
<rect width="555.5" height="80" fill="url(#sky)"/>
<g mask="url(#gm)" stroke="#8f8a86" stroke-width="1" fill="none"><line x1="-2720.8" y1="62.2" x2="-1286.6" y2="45.1"/><line x1="-2710.2" y1="62.4" x2="-1267.0" y2="45.0"/><line x1="-2725.9" y1="62.8" x2="-1247.6" y2="44.9"/><line x1="-2715.1" y1="63.0" x2="-1228.5" y2="44.7"/><line x1="-2704.2" y1="63.1" x2="-1209.6" y2="44.6"/><line x1="-2720.2" y1="63.6" x2="-1191.0" y2="44.5"/><line x1="-2709.1" y1="63.8" x2="-1172.6" y2="44.4"/><line x1="-2725.4" y1="64.3" x2="-1154.5" y2="44.3"/><line x1="-2714.2" y1="64.5" x2="-1136.6" y2="44.2"/><line x1="-2730.9" y1="65.0" x2="-1118.9" y2="44.2"/><line x1="-2719.4" y1="65.2" x2="-1101.5" y2="44.1"/><line x1="-2707.9" y1="65.4" x2="-1084.3" y2="44.0"/><line x1="-2724.9" y1="65.9" x2="-1067.3" y2="43.9"/><line x1="-2713.1" y1="66.1" x2="-1050.6" y2="43.8"/><line x1="-2730.7" y1="66.7" x2="-1034.0" y2="43.7"/><line x1="-2718.7" y1="66.9" x2="-1017.7" y2="43.6"/><line x1="-2706.5" y1="67.1" x2="-1001.5" y2="43.5"/><line x1="-2724.4" y1="67.7" x2="-985.6" y2="43.4"/><line x1="-2712.0" y1="67.9" x2="-969.9" y2="43.3"/><line x1="-2730.4" y1="68.5" x2="-954.3" y2="43.3"/><line x1="-2717.8" y1="68.7" x2="-939.0" y2="43.2"/><line x1="-2705.0" y1="69.0" x2="-923.8" y2="43.1"/><line x1="-2723.8" y1="69.6" x2="-908.8" y2="43.0"/><line x1="-2710.8" y1="69.9" x2="-894.0" y2="42.9"/><line x1="-2730.1" y1="70.6" x2="-879.3" y2="42.9"/><line x1="-2716.8" y1="70.8" x2="-864.9" y2="42.8"/><line x1="-2703.4" y1="71.0" x2="-850.6" y2="42.7"/><line x1="-2723.2" y1="71.8" x2="-836.5" y2="42.6"/><line x1="-2709.4" y1="72.0" x2="-822.5" y2="42.5"/><line x1="-2729.8" y1="72.8" x2="-808.7" y2="42.5"/><line x1="-2715.8" y1="73.1" x2="-795.0" y2="42.4"/><line x1="-2701.6" y1="73.4" x2="-781.6" y2="42.3"/><line x1="-2722.4" y1="74.2" x2="-768.2" y2="42.3"/><line x1="-2707.9" y1="74.5" x2="-755.0" y2="42.2"/><line x1="-2729.4" y1="75.4" x2="-742.0" y2="42.1"/><line x1="-2714.6" y1="75.7" x2="-729.1" y2="42.0"/><line x1="-2699.5" y1="76.0" x2="-716.4" y2="42.0"/><line x1="-2721.6" y1="76.9" x2="-703.8" y2="41.9"/><line x1="-2706.2" y1="77.2" x2="-691.3" y2="41.8"/><line x1="-2729.0" y1="78.2" x2="-678.9" y2="41.8"/><line x1="-2713.3" y1="78.5" x2="-666.7" y2="41.7"/><line x1="-2697.3" y1="78.9" x2="-654.7" y2="41.6"/><line x1="-2720.7" y1="79.9" x2="-642.7" y2="41.6"/><line x1="-2704.3" y1="80.3" x2="-630.9" y2="41.5"/><line x1="-2728.6" y1="81.4" x2="-619.2" y2="41.4"/><line x1="-2711.7" y1="81.8" x2="-607.7" y2="41.4"/><line x1="-2694.7" y1="82.2" x2="-596.2" y2="41.3"/><line x1="-2719.7" y1="83.4" x2="-584.9" y2="41.3"/><line x1="-2702.1" y1="83.8" x2="-573.7" y2="41.2"/><line x1="-2728.1" y1="85.1" x2="-562.6" y2="41.1"/><line x1="-2710.0" y1="85.5" x2="-551.7" y2="41.1"/><line x1="-2691.7" y1="86.0" x2="-540.8" y2="41.0"/><line x1="-2718.5" y1="87.4" x2="-530.1" y2="41.0"/><line x1="-2699.6" y1="87.8" x2="-519.4" y2="40.9"/><line x1="-2727.5" y1="89.3" x2="-508.9" y2="40.9"/><line x1="-2708.0" y1="89.8" x2="-498.4" y2="40.8"/><line x1="-2688.3" y1="90.3" x2="-488.1" y2="40.7"/><line x1="-2717.1" y1="92.0" x2="-477.9" y2="40.7"/><line x1="-2696.7" y1="92.5" x2="-467.8" y2="40.6"/><line x1="-2726.8" y1="94.3" x2="-457.8" y2="40.6"/><line x1="-2705.7" y1="94.9" x2="-447.8" y2="40.5"/><line x1="-2684.2" y1="95.5" x2="-438.0" y2="40.5"/><line x1="-2715.4" y1="97.4" x2="-428.3" y2="40.4"/><line x1="-2693.2" y1="98.0" x2="-418.6" y2="40.4"/><line x1="-2726.0" y1="100.1" x2="-409.1" y2="40.3"/><line x1="-2703.0" y1="100.8" x2="-399.7" y2="40.3"/><line x1="-2679.5" y1="101.5" x2="-390.3" y2="40.2"/><line x1="-2713.5" y1="103.8" x2="-381.0" y2="40.2"/><line x1="-2689.1" y1="104.6" x2="-371.8" y2="40.1"/><line x1="-2725.0" y1="107.1" x2="-362.7" y2="40.1"/><line x1="-2699.7" y1="107.9" x2="-353.7" y2="40.0"/><line x1="-2673.8" y1="108.8" x2="-344.8" y2="40.0"/><line x1="-2711.1" y1="111.6" x2="-335.9" y2="39.9"/><line x1="-2684.2" y1="112.5" x2="-327.2" y2="39.9"/><line x1="-2723.8" y1="115.6" x2="-318.5" y2="39.8"/><line x1="-2695.6" y1="116.6" x2="-309.9" y2="39.8"/><line x1="-2666.8" y1="117.7" x2="-301.3" y2="39.7"/><line x1="-2708.2" y1="121.2" x2="-292.9" y2="39.7"/><line x1="-2678.1" y1="122.4" x2="-284.5" y2="39.6"/><line x1="-2722.3" y1="126.2" x2="-276.2" y2="39.6"/><line x1="-2690.6" y1="127.5" x2="-268.0" y2="39.5"/><line x1="-2658.0" y1="128.9" x2="-259.8" y2="39.5"/><line x1="-2704.6" y1="133.3" x2="-251.7" y2="39.5"/><line x1="-2670.3" y1="134.8" x2="-243.7" y2="39.4"/><line x1="-2720.3" y1="139.8" x2="-235.8" y2="39.4"/><line x1="-2684.1" y1="141.5" x2="-227.9" y2="39.3"/><line x1="-2646.7" y1="143.3" x2="-220.1" y2="39.3"/><line x1="-2699.8" y1="149.2" x2="-212.4" y2="39.2"/><line x1="-2660.1" y1="151.2" x2="-204.7" y2="39.2"/><line x1="-2717.8" y1="157.9" x2="-197.1" y2="39.2"/><line x1="-2675.4" y1="160.2" x2="-189.6" y2="39.1"/><line x1="-2631.5" y1="162.6" x2="-182.1" y2="39.1"/><line x1="3263.0" y1="69.0" x2="3185.9" y2="67.2"/><line x1="-2693.3" y1="170.7" x2="-174.7" y2="39.0"/><line x1="3263.2" y1="70.4" x2="3073.2" y2="65.9"/><line x1="-2646.1" y1="173.6" x2="-167.3" y2="39.0"/><line x1="3263.4" y1="72.0" x2="2968.2" y2="64.6"/><line x1="-2714.2" y1="183.1" x2="-160.0" y2="39.0"/><line x1="3263.6" y1="73.7" x2="2870.1" y2="63.5"/><line x1="-2663.3" y1="186.4" x2="-152.8" y2="38.9"/><line x1="3263.8" y1="75.5" x2="2778.4" y2="62.4"/><line x1="-2610.2" y1="189.9" x2="-145.6" y2="38.9"/><line x1="3264.1" y1="77.5" x2="2692.3" y2="61.4"/><line x1="-2683.9" y1="201.8" x2="-138.5" y2="38.8"/><line x1="3264.4" y1="79.7" x2="2611.4" y2="60.4"/><line x1="-2625.9" y1="206.0" x2="-131.5" y2="38.8"/><line x1="3264.7" y1="82.1" x2="2535.3" y2="59.5"/><line x1="-2709.0" y1="220.5" x2="-124.5" y2="38.8"/><line x1="3265.0" y1="84.7" x2="2463.4" y2="58.7"/><line x1="-2645.1" y1="225.7" x2="-117.6" y2="38.7"/><line x1="3265.4" y1="87.6" x2="2395.6" y2="57.9"/><line x1="-2577.8" y1="231.2" x2="-110.7" y2="38.7"/><line x1="3265.8" y1="90.8" x2="2331.3" y2="57.1"/><line x1="-2669.2" y1="250.4" x2="-103.9" y2="38.7"/><line x1="3266.3" y1="94.4" x2="2270.5" y2="56.4"/><line x1="-2593.9" y1="257.3" x2="-97.1" y2="38.6"/><line x1="3266.8" y1="98.4" x2="2212.7" y2="55.7"/><line x1="-2700.2" y1="282.2" x2="-90.4" y2="38.6"/><line x1="3267.4" y1="103.0" x2="2157.8" y2="55.0"/><line x1="-2614.8" y1="291.3" x2="-83.7" y2="38.5"/><line x1="3268.1" y1="108.2" x2="2105.6" y2="54.4"/><line x1="-2522.9" y1="301.1" x2="-77.1" y2="38.5"/><line x1="3268.9" y1="114.2" x2="2055.9" y2="53.8"/><line x1="-2643.0" y1="337.2" x2="-70.6" y2="38.5"/><line x1="3249.1" y1="120.2" x2="2008.4" y2="53.3"/><line x1="-2535.6" y1="350.8" x2="-64.1" y2="38.4"/><line x1="3248.3" y1="128.2" x2="1963.2" y2="52.7"/><line x1="-2683.3" y1="402.5" x2="-57.6" y2="38.4"/><line x1="3247.4" y1="137.9" x2="1919.9" y2="52.2"/><line x1="-2553.9" y1="422.8" x2="-51.2" y2="38.4"/><line x1="3246.2" y1="149.7" x2="1878.4" y2="51.7"/><line x1="-2409.7" y1="445.4" x2="-44.9" y2="38.3"/><line x1="3244.8" y1="164.3" x2="1838.8" y2="51.3"/><line x1="-2582.9" y1="536.4" x2="-38.6" y2="38.3"/><line x1="3243.0" y1="183.0" x2="1800.8" y2="50.8"/><line x1="-2396.1" y1="574.5" x2="-32.3" y2="38.3"/><line x1="3240.6" y1="207.8" x2="1764.3" y2="50.4"/><line x1="-2635.3" y1="742.1" x2="-26.1" y2="38.2"/><line x1="3237.3" y1="242.0" x2="1729.3" y2="50.0"/><line x1="-2370.1" y1="820.0" x2="-20.0" y2="38.2"/><line x1="3232.4" y1="292.5" x2="1695.6" y2="49.6"/><line x1="-2039.8" y1="917.0" x2="-13.9" y2="38.2"/><line x1="3224.4" y1="374.7" x2="1663.3" y2="49.2"/><line x1="-2301.6" y1="1467.6" x2="-7.8" y2="38.1"/><line x1="3209.2" y1="531.4" x2="1632.1" y2="48.8"/><line x1="-1616.6" y1="1824.5" x2="-1.8" y2="38.1"/><line x1="3168.8" y1="948.8" x2="1602.1" y2="48.5"/><line x1="-279.4" y1="1433.9" x2="4.2" y2="38.1"/><line x1="1930.6" y1="1735.4" x2="1573.2" y2="48.1"/><line x1="873.1" y1="1772.3" x2="10.1" y2="38.0"/><line x1="-545.6" y1="1636.1" x2="1545.3" y2="47.8"/><line x1="1650.2" y1="1401.7" x2="16.0" y2="38.0"/><line x1="-2017.2" y1="1290.4" x2="1518.4" y2="47.5"/><line x1="3222.0" y1="1723.0" x2="21.8" y2="38.0"/><line x1="-2412.1" y1="940.1" x2="1492.4" y2="47.2"/><line x1="2508.8" y1="992.3" x2="27.6" y2="37.9"/><line x1="-2635.3" y1="742.1" x2="1467.3" y2="46.9"/><line x1="2770.9" y1="867.3" x2="33.3" y2="37.9"/><line x1="-2461.5" y1="572.1" x2="1443.1" y2="46.6"/><line x1="2972.8" y1="771.1" x2="39.0" y2="37.9"/><line x1="-2600.3" y1="495.1" x2="1419.6" y2="46.3"/><line x1="3133.0" y1="694.6" x2="44.7" y2="37.9"/><line x1="-2704.6" y1="437.2" x2="1396.9" y2="46.0"/><line x1="3263.3" y1="632.5" x2="50.3" y2="37.8"/><line x1="-2583.4" y1="375.2" x2="1374.8" y2="45.8"/><line x1="2902.9" y1="504.2" x2="55.9" y2="37.8"/><line x1="-2664.9" y1="342.3" x2="1353.5" y2="45.5"/><line x1="3014.2" y1="471.7" x2="61.4" y2="37.8"/><line x1="-2573.3" y1="304.5" x2="1332.9" y2="45.3"/><line x1="3111.3" y1="443.4" x2="66.9" y2="37.7"/><line x1="-2640.3" y1="283.2" x2="1312.8" y2="45.1"/><line x1="3196.6" y1="418.4" x2="72.4" y2="37.7"/><line x1="-2697.6" y1="265.0" x2="1293.4" y2="44.8"/><line x1="2955.1" y1="360.7" x2="77.8" y2="37.7"/><line x1="-2623.5" y1="242.9" x2="1274.5" y2="44.6"/><line x1="3031.9" y1="344.6" x2="83.2" y2="37.6"/><line x1="-2673.3" y1="229.9" x2="1256.2" y2="44.4"/><line x1="3101.5" y1="329.9" x2="88.5" y2="37.6"/><line x1="-2717.4" y1="218.3" x2="1238.4" y2="44.2"/><line x1="3164.9" y1="316.5" x2="93.8" y2="37.6"/><line x1="-2655.3" y1="203.9" x2="1221.1" y2="44.0"/><line x1="3222.9" y1="304.3" x2="99.1" y2="37.6"/><line x1="-2694.8" y1="195.1" x2="1204.2" y2="43.8"/><line x1="3041.6" y1="274.2" x2="104.3" y2="37.5"/><line x1="-2730.6" y1="187.1" x2="1187.9" y2="43.6"/><line x1="3095.9" y1="265.3" x2="109.5" y2="37.5"/><line x1="-2677.2" y1="176.9" x2="1171.9" y2="43.4"/><line x1="3146.3" y1="257.0" x2="114.7" y2="37.5"/><line x1="-2710.0" y1="170.6" x2="1156.4" y2="43.2"/><line x1="3193.3" y1="249.2" x2="119.8" y2="37.4"/><line x1="-2663.1" y1="162.4" x2="1141.3" y2="43.0"/><line x1="3237.3" y1="242.0" x2="124.9" y2="37.4"/><line x1="-2693.3" y1="157.2" x2="1126.6" y2="42.8"/><line x1="3092.3" y1="223.5" x2="129.9" y2="37.4"/><line x1="-2721.2" y1="152.4" x2="1112.3" y2="42.7"/><line x1="3134.2" y1="217.9" x2="134.9" y2="37.4"/><line x1="-2679.5" y1="146.1" x2="1098.3" y2="42.5"/><line x1="3173.7" y1="212.5" x2="139.9" y2="37.3"/><line x1="-2705.5" y1="142.1" x2="1084.7" y2="42.4"/><line x1="3211.0" y1="207.5" x2="144.8" y2="37.3"/><line x1="-2729.9" y1="138.4" x2="1071.4" y2="42.2"/><line x1="3246.3" y1="202.7" x2="149.7" y2="37.3"/><line x1="-2692.3" y1="133.4" x2="1058.5" y2="42.0"/><line x1="3125.6" y1="190.3" x2="154.6" y2="37.3"/><line x1="-2715.2" y1="130.2" x2="1045.8" y2="41.9"/><line x1="3159.6" y1="186.4" x2="159.5" y2="37.2"/><line x1="-2681.0" y1="126.0" x2="1033.5" y2="41.7"/><line x1="3192.1" y1="182.6" x2="164.3" y2="37.2"/><line x1="-2702.6" y1="123.2" x2="1021.4" y2="41.6"/><line x1="3223.0" y1="179.1" x2="169.0" y2="37.2"/><line x1="-2723.1" y1="120.6" x2="1009.6" y2="41.5"/><line x1="3252.5" y1="175.7" x2="173.8" y2="37.2"/><line x1="-2691.7" y1="117.1" x2="998.1" y2="41.3"/><line x1="3149.1" y1="166.7" x2="178.5" y2="37.1"/><line x1="-2711.1" y1="114.8" x2="986.9" y2="41.2"/><line x1="3177.8" y1="163.9" x2="183.2" y2="37.1"/><line x1="-2729.5" y1="112.7" x2="975.9" y2="41.1"/><line x1="3205.3" y1="161.1" x2="187.8" y2="37.1"/><line x1="-2700.5" y1="109.7" x2="965.1" y2="40.9"/><line x1="3231.7" y1="158.5" x2="192.4" y2="37.1"/><line x1="-2718.2" y1="107.8" x2="954.6" y2="40.8"/><line x1="3257.1" y1="156.0" x2="197.0" y2="37.0"/><line x1="-2691.2" y1="105.2" x2="944.3" y2="40.7"/><line x1="3166.6" y1="149.2" x2="201.6" y2="37.0"/><line x1="-2708.0" y1="103.5" x2="934.3" y2="40.6"/><line x1="3191.4" y1="147.0" x2="206.1" y2="37.0"/><line x1="-2724.2" y1="101.9" x2="924.4" y2="40.5"/><line x1="3215.2" y1="144.9" x2="210.6" y2="37.0"/><line x1="-2699.0" y1="99.7" x2="914.8" y2="40.3"/><line x1="3238.3" y1="142.9" x2="215.1" y2="36.9"/><line x1="-2714.5" y1="98.2" x2="905.3" y2="40.2"/><line x1="3260.5" y1="141.0" x2="219.5" y2="36.9"/><line x1="-2729.3" y1="96.8" x2="896.1" y2="40.1"/><line x1="3180.1" y1="135.7" x2="223.9" y2="36.9"/><line x1="-2705.7" y1="94.9" x2="887.0" y2="40.0"/><line x1="3201.9" y1="133.9" x2="228.3" y2="36.9"/><line x1="-2720.0" y1="93.6" x2="878.1" y2="39.9"/><line x1="3223.0" y1="132.3" x2="232.6" y2="36.8"/><line x1="-2697.8" y1="91.8" x2="869.4" y2="39.8"/><line x1="3243.5" y1="130.7" x2="236.9" y2="36.8"/><line x1="-2711.6" y1="90.7" x2="860.9" y2="39.7"/><line x1="3263.3" y1="129.1" x2="241.2" y2="36.8"/><line x1="-2724.9" y1="89.6" x2="852.5" y2="39.6"/><line x1="3190.9" y1="124.9" x2="245.5" y2="36.8"/><line x1="-2703.9" y1="88.0" x2="844.3" y2="39.5"/><line x1="3210.4" y1="123.5" x2="249.7" y2="36.7"/><line x1="-2716.7" y1="87.0" x2="836.3" y2="39.4"/><line x1="3229.3" y1="122.1" x2="254.0" y2="36.7"/><line x1="-2729.2" y1="86.0" x2="828.4" y2="39.3"/><line x1="3247.6" y1="120.8" x2="258.1" y2="36.7"/><line x1="-2709.3" y1="84.6" x2="820.6" y2="39.2"/><line x1="3265.5" y1="119.6" x2="262.3" y2="36.7"/><line x1="-2721.3" y1="83.7" x2="813.0" y2="39.1"/><line x1="3199.7" y1="116.1" x2="266.4" y2="36.7"/><line x1="-2702.4" y1="82.5" x2="805.6" y2="39.1"/><line x1="3217.3" y1="114.9" x2="270.5" y2="36.6"/><line x1="-2714.1" y1="81.6" x2="798.2" y2="39.0"/><line x1="3234.4" y1="113.8" x2="274.6" y2="36.6"/><line x1="-2725.4" y1="80.8" x2="791.1" y2="38.9"/><line x1="3251.1" y1="112.7" x2="278.7" y2="36.6"/><line x1="-2707.4" y1="79.7" x2="784.0" y2="38.8"/><line x1="3267.3" y1="111.7" x2="282.7" y2="36.6"/><line x1="-2718.4" y1="78.9" x2="777.1" y2="38.7"/><line x1="3207.0" y1="108.8" x2="286.7" y2="36.5"/><line x1="-2729.0" y1="78.2" x2="770.2" y2="38.6"/><line x1="3223.0" y1="107.8" x2="290.7" y2="36.5"/><line x1="-2711.8" y1="77.2" x2="763.6" y2="38.6"/><line x1="3238.7" y1="106.9" x2="294.6" y2="36.5"/><line x1="-2722.2" y1="76.5" x2="757.0" y2="38.5"/><line x1="3253.9" y1="105.9" x2="298.6" y2="36.5"/><line x1="-2705.8" y1="75.6" x2="750.5" y2="38.4"/><line x1="3268.8" y1="105.1" x2="302.5" y2="36.5"/><line x1="-2715.9" y1="74.9" x2="744.2" y2="38.3"/><line x1="3213.2" y1="102.6" x2="306.4" y2="36.4"/><line x1="-2725.8" y1="74.3" x2="737.9" y2="38.3"/><line x1="3227.9" y1="101.8" x2="310.2" y2="36.4"/><line x1="-2710.0" y1="73.4" x2="731.8" y2="38.2"/><line x1="3242.3" y1="101.0" x2="314.1" y2="36.4"/><line x1="-2719.6" y1="72.9" x2="725.7" y2="38.1"/><line x1="3256.4" y1="100.2" x2="317.9" y2="36.4"/><line x1="-2729.0" y1="72.3" x2="719.8" y2="38.0"/><line x1="3204.6" y1="98.0" x2="321.7" y2="36.4"/><line x1="-2713.8" y1="71.5" x2="714.0" y2="38.0"/><line x1="3218.5" y1="97.3" x2="325.4" y2="36.3"/><line x1="-2723.0" y1="71.0" x2="708.2" y2="37.9"/><line x1="3232.1" y1="96.6" x2="329.2" y2="36.3"/><line x1="-2708.4" y1="70.2" x2="702.6" y2="37.8"/><line x1="3245.4" y1="95.9" x2="332.9" y2="36.3"/><line x1="-2717.3" y1="69.7" x2="697.0" y2="37.8"/><line x1="3258.4" y1="95.2" x2="336.6" y2="36.3"/><line x1="-2726.1" y1="69.3" x2="691.5" y2="37.7"/><line x1="3210.2" y1="93.4" x2="340.3" y2="36.3"/><line x1="-2712.0" y1="68.6" x2="686.1" y2="37.6"/><line x1="3223.1" y1="92.7" x2="343.9" y2="36.2"/><line x1="-2720.6" y1="68.1" x2="680.8" y2="37.6"/><line x1="3235.7" y1="92.1" x2="347.6" y2="36.2"/><line x1="-2728.9" y1="67.7" x2="675.6" y2="37.5"/><line x1="3248.1" y1="91.5" x2="351.2" y2="36.2"/><line x1="-2715.4" y1="67.1" x2="670.5" y2="37.5"/><line x1="3260.3" y1="90.9" x2="354.8" y2="36.2"/><line x1="-2723.5" y1="66.6" x2="665.4" y2="37.4"/><line x1="3215.0" y1="89.3" x2="358.3" y2="36.2"/><line x1="-2710.5" y1="66.0" x2="660.4" y2="37.3"/><line x1="3227.0" y1="88.8" x2="361.9" y2="36.1"/><line x1="-2718.5" y1="65.6" x2="655.5" y2="37.3"/><line x1="3238.9" y1="88.2" x2="365.4" y2="36.1"/><line x1="-2726.3" y1="65.2" x2="650.6" y2="37.2"/><line x1="3250.5" y1="87.7" x2="368.9" y2="36.1"/><line x1="-2713.6" y1="64.7" x2="645.9" y2="37.2"/><line x1="3261.9" y1="87.2" x2="372.4" y2="36.1"/><line x1="-2721.3" y1="64.3" x2="641.2" y2="37.1"/><line x1="3219.3" y1="85.7" x2="375.9" y2="36.1"/><line x1="-2728.8" y1="64.0" x2="636.6" y2="37.1"/><line x1="3230.6" y1="85.2" x2="379.3" y2="36.0"/><line x1="-2716.6" y1="63.4" x2="632.0" y2="37.0"/><line x1="3241.6" y1="84.8" x2="382.7" y2="36.0"/><line x1="-2724.0" y1="63.1" x2="627.5" y2="36.9"/><line x1="3252.5" y1="84.3" x2="386.1" y2="36.0"/><line x1="-2712.1" y1="62.6" x2="623.1" y2="36.9"/><line x1="3263.3" y1="83.8" x2="389.5" y2="36.0"/><line x1="-2719.4" y1="62.3" x2="618.7" y2="36.8"/><line x1="3223.1" y1="82.5" x2="392.9" y2="36.0"/><line x1="-2653.0" y1="61.4" x2="614.4" y2="36.8"/><line x1="3233.7" y1="82.1" x2="396.2" y2="36.0"/><line x1="-2572.8" y1="60.4" x2="610.1" y2="36.7"/><line x1="3244.1" y1="81.7" x2="399.6" y2="35.9"/><line x1="-2497.3" y1="59.5" x2="605.9" y2="36.7"/><line x1="3254.4" y1="81.3" x2="402.9" y2="35.9"/><line x1="-2426.1" y1="58.7" x2="601.8" y2="36.6"/><line x1="3264.5" y1="80.9" x2="406.2" y2="35.9"/><line x1="-2358.9" y1="57.9" x2="597.7" y2="36.6"/><line x1="3226.4" y1="79.7" x2="409.4" y2="35.9"/><line x1="-2295.2" y1="57.1" x2="593.7" y2="36.5"/><line x1="3236.5" y1="79.3" x2="412.7" y2="35.9"/><line x1="-2235.0" y1="56.4" x2="589.7" y2="36.5"/><line x1="3246.3" y1="78.9" x2="415.9" y2="35.8"/><line x1="-2177.7" y1="55.7" x2="585.8" y2="36.5"/><line x1="3256.1" y1="78.6" x2="419.2" y2="35.8"/><line x1="-2123.4" y1="55.1" x2="582.0" y2="36.4"/><line x1="3265.6" y1="78.2" x2="422.4" y2="35.8"/><line x1="-2071.6" y1="54.5" x2="578.2" y2="36.4"/><line x1="3229.5" y1="77.2" x2="425.5" y2="35.8"/><line x1="-2022.4" y1="53.9" x2="574.4" y2="36.3"/><line x1="3239.0" y1="76.8" x2="428.7" y2="35.8"/><line x1="-1975.4" y1="53.3" x2="570.7" y2="36.3"/><line x1="3248.3" y1="76.5" x2="431.9" y2="35.8"/><line x1="-1930.5" y1="52.8" x2="567.0" y2="36.2"/><line x1="3257.6" y1="76.1" x2="435.0" y2="35.7"/><line x1="-1887.6" y1="52.3" x2="563.4" y2="36.2"/><line x1="3266.7" y1="75.8" x2="438.1" y2="35.7"/><line x1="-1846.6" y1="51.8" x2="559.8" y2="36.1"/><line x1="3232.2" y1="74.9" x2="441.2" y2="35.7"/><line x1="-1807.3" y1="51.3" x2="556.3" y2="36.1"/><line x1="3241.2" y1="74.6" x2="444.3" y2="35.7"/><line x1="-1769.7" y1="50.8" x2="552.8" y2="36.1"/><line x1="3250.1" y1="74.2" x2="447.3" y2="35.7"/><line x1="-1733.6" y1="50.4" x2="549.4" y2="36.0"/><line x1="3258.9" y1="73.9" x2="450.4" y2="35.7"/><line x1="-1698.9" y1="50.0" x2="546.0" y2="36.0"/><line x1="3267.6" y1="73.6" x2="453.4" y2="35.6"/><line x1="-1665.6" y1="49.6" x2="542.7" y2="35.9"/><line x1="3234.7" y1="72.8" x2="456.4" y2="35.6"/><line x1="-1633.5" y1="49.2" x2="539.4" y2="35.9"/><line x1="3243.3" y1="72.5" x2="459.4" y2="35.6"/><line x1="-1602.7" y1="48.8" x2="536.1" y2="35.9"/><line x1="3251.8" y1="72.2" x2="462.4" y2="35.6"/><line x1="-1573.0" y1="48.5" x2="532.9" y2="35.8"/><line x1="3260.2" y1="71.9" x2="465.4" y2="35.6"/><line x1="-1544.4" y1="48.1" x2="529.7" y2="35.8"/><line x1="3268.4" y1="71.7" x2="468.3" y2="35.6"/><line x1="-1516.8" y1="47.8" x2="526.5" y2="35.8"/><line x1="3237.0" y1="70.9" x2="471.3" y2="35.5"/><line x1="-1490.1" y1="47.5" x2="523.4" y2="35.7"/><line x1="3245.2" y1="70.6" x2="474.2" y2="35.5"/><line x1="-1464.4" y1="47.2" x2="520.3" y2="35.7"/><line x1="3253.3" y1="70.4" x2="477.1" y2="35.5"/><line x1="-1439.6" y1="46.9" x2="517.3" y2="35.6"/><line x1="3261.3" y1="70.1" x2="480.0" y2="35.5"/><line x1="-1415.5" y1="46.6" x2="514.3" y2="35.6"/><line x1="3231.1" y1="69.4" x2="482.8" y2="35.5"/><line x1="-1392.3" y1="46.3" x2="511.3" y2="35.6"/><line x1="3239.1" y1="69.1" x2="485.7" y2="35.5"/><line x1="-1369.8" y1="46.1" x2="508.4" y2="35.5"/><line x1="3246.9" y1="68.9" x2="488.5" y2="35.5"/><line x1="-1348.0" y1="45.8" x2="505.5" y2="35.5"/><line x1="3254.7" y1="68.7" x2="491.4" y2="35.4"/><line x1="-1326.9" y1="45.5" x2="502.6" y2="35.5"/><line x1="3262.3" y1="68.4" x2="494.2" y2="35.4"/><line x1="-1306.5" y1="45.3" x2="499.8" y2="35.4"/><line x1="3233.4" y1="67.8" x2="497.0" y2="35.4"/><line x1="-1286.6" y1="45.1" x2="497.0" y2="35.4"/></g>
<polygon points="0.0,327.0 440.0,243.3 555.5,297.6 555.5,321.0 0.0,488.7" fill="#5f6673"/><polygon points="0.0,488.7 555.5,321.0 555.5,401.3 519.0,494.7 164.8,662.0 0.0,662.0" fill="#50565f"/><polygon points="519.0,494.7 555.5,401.3 555.5,662.0 164.8,662.0" fill="#646a77"/><line x1="285" y1="603" x2="309" y2="662" stroke="#7d7f86" stroke-width="0.8"/><line x1="531" y1="460" x2="555" y2="476" stroke="#7d7f86" stroke-width="0.8"/></svg>
<div style="left:734px;top:145.5px;width:47.5px;height:201.5px;background:#1f2326;border-radius:5px;border:1px solid #15181a;"></div>
<div style="left:748px;top:151.5px;width:20px;height:1px;background:#5a5e62;"></div>
<div style="left:748px;top:155px;width:20px;height:1px;background:#5a5e62;"></div>
<div style="left:737.7px;top:166px;width:39.8px;height:23.5px;background:#393b3d;border-radius:3px;"></div>
<div style="left:737.7px;top:193.3px;width:39.8px;height:21.5px;background:#585858;border-radius:2px 2px 0 0;"></div>
<div style="left:737.7px;top:217.6px;width:39.8px;height:24.5px;background:#46607c;border-radius:2px 2px 0 0;"></div>
<div style="left:737.7px;top:243.9px;width:39.8px;height:23.6px;background:#585858;border-radius:2px 2px 0 0;"></div>
<div style="left:737.7px;top:269.4px;width:39.8px;height:23.9px;background:#585858;border-radius:2px 2px 0 0;"></div>
<div style="left:737.7px;top:295.3px;width:39.8px;height:23px;background:#585858;border-radius:2px 2px 0 0;"></div>
<div style="left:737.7px;top:320.6px;width:39.8px;height:23px;background:#585858;border-radius:2px 2px 0 0;"></div>
<svg style="position:absolute;left:748px;top:168px;" width="19" height="20" viewBox="0 0 19 20"><path d="M9.5 1.5 L17 5.8 V14.2 L9.5 18.5 L2 14.2 V5.8 Z M2 5.8 L9.5 10 L17 5.8 M9.5 10 V18.5" fill="none" stroke="#c89a5c" stroke-width="1.2" stroke-linejoin="round"/></svg>
<svg style="position:absolute;left:747px;top:194.5px;" width="20" height="20" viewBox="0 0 20 20"><g stroke="#dcdcdc" stroke-linecap="round" fill="none"><path d="M6.3 10.5 V3.8" stroke-width="2.4"/><path d="M9.4 10 V2.2" stroke-width="2.4"/><path d="M12.5 10 V2.8" stroke-width="2.4"/><path d="M15.4 11 V5" stroke-width="2.2"/><path d="M5.5 13.5 L2.6 9.8" stroke-width="2.3"/></g><path d="M5.2 10 H16.6 V13.5 Q16 17.5 12.5 18 H9 Q6.5 17.8 4.8 14.2 Z" fill="#dcdcdc"/></svg>
<svg style="position:absolute;left:746px;top:220px;" width="22" height="22" viewBox="0 0 22 22"><path d="M11 3.5 V18.5 M3.5 11 H18.5" stroke="#f0f0f0" stroke-width="1.3"/><polygon points="11,0.8 8.2,4.5 13.8,4.5" fill="#f0f0f0"/><polygon points="11,21.2 8.2,17.5 13.8,17.5" fill="#f0f0f0"/><polygon points="0.8,11 4.5,8.2 4.5,13.8" fill="#f0f0f0"/><polygon points="21.2,11 17.5,8.2 17.5,13.8" fill="#f0f0f0"/></svg>
<svg style="position:absolute;left:747px;top:246px;" width="20" height="20" viewBox="0 0 20 20"><path d="M7 3.5 A7.5 7.5 0 0 0 9 17.5 M13 16.5 A7.5 7.5 0 0 0 11 2.5" fill="none" stroke="#c8c8c8" stroke-width="1.3"/><path d="M5.5 14.5 L9 17.5 L6 19.5 M14.5 5.5 L11 2.5 L14 0.5" fill="none" stroke="#c8c8c8" stroke-width="1.3"/></svg>
<svg style="position:absolute;left:747px;top:271px;" width="20" height="20" viewBox="0 0 20 20"><rect x="2" y="2" width="16" height="16" fill="none" stroke="#c8c8c8" stroke-width="1.3"/><rect x="2" y="12" width="6" height="6" fill="none" stroke="#c8c8c8" stroke-width="1.3"/><path d="M8 12 L15 5 M10.5 5 H15 V9.5" fill="none" stroke="#c8c8c8" stroke-width="1.3"/></svg>
<svg style="position:absolute;left:747px;top:297px;" width="20" height="20" viewBox="0 0 20 20"><path d="M3 6 V14 M17 6 V14 M6 3 H14 M6 17 H14" stroke="#c8c8c8" stroke-width="1.5"/><rect x="1.5" y="1.5" width="3" height="3" fill="#c8c8c8"/><rect x="15.5" y="1.5" width="3" height="3" fill="#c8c8c8"/><rect x="1.5" y="15.5" width="3" height="3" fill="#c8c8c8"/><rect x="15.5" y="15.5" width="3" height="3" fill="#c8c8c8"/></svg>
<svg style="position:absolute;left:746px;top:322px;" width="22" height="22" viewBox="0 0 22 22"><circle cx="11" cy="11" r="8" fill="none" stroke="#c8c8c8" stroke-width="1.2" stroke-dasharray="9 3.6"/><path d="M11 4.5 V17.5 M4.5 11 H17.5 M9 6.5 L11 4.5 L13 6.5 M9 15.5 L11 17.5 L13 15.5 M6.5 9 L4.5 11 L6.5 13 M15.5 9 L17.5 11 L15.5 13" fill="none" stroke="#c8c8c8" stroke-width="1.2"/><polygon points="1,21 1,17 5,21" fill="#c8c8c8"/><polygon points="21,1 17,1 21,5" fill="#c8c8c8"/></svg>
<div style="left:1157px;top:152px;width:19px;height:1.1px;background:#666b72;"></div>
<div style="left:1157px;top:155.4px;width:19px;height:1.1px;background:#666b72;"></div>
<svg style="position:absolute;left:1180px;top:150px;" width="80" height="95" viewBox="0 0 80 95">
<polygon points="29,58.7 5.8,58.5 5.8,69.8" fill="#c4c4c4"/><ellipse cx="6" cy="64.2" rx="2.2" ry="5.6" fill="#e2e2e2"/>
<polygon points="40,63 35.5,82 44.5,82" fill="#d4d4d4"/><ellipse cx="40" cy="82" rx="4.5" ry="2" fill="#e6e6e6"/>
<polygon points="46,62 50,80 64,70" fill="#9c9c9c"/><ellipse cx="58.6" cy="74.3" rx="8.5" ry="6" transform="rotate(-40 58.6 74.3)" fill="#dcdcdc"/>
<polygon points="30.7,51 40,46.3 50.8,51 50.8,63 40,68 30.7,63" fill="#d0d0d0"/><polygon points="30.7,51 40,46.3 50.8,51 41,56" fill="#e4e4e4"/><polygon points="41,56 50.8,51 50.8,63 41,68" fill="#f0f0f0"/>
<polygon points="30.7,21.5 47.7,21.5 40,46.3" fill="#8fdd63"/><ellipse cx="39.2" cy="21.8" rx="8.5" ry="1.6" fill="#9be870"/>
<polygon points="52.4,52.5 66,43.5 67.5,55.5" fill="#ee5e4c"/><ellipse cx="66.6" cy="49.5" rx="2.4" ry="6" transform="rotate(-15 66.6 49.5)" fill="#f26a58"/>
<circle cx="29" cy="43.2" r="5" fill="#4f7fea"/>
<text x="34.5" y="15.5" font-family="Liberation Sans" font-size="13.5" fill="#ffffff">y</text>
<text x="18" y="40" font-family="Liberation Sans" font-size="13.5" fill="#ffffff">z</text>
<text x="69" y="51.5" font-family="Liberation Sans" font-size="13.5" fill="#ffffff">x</text>
</svg>
<svg style="position:absolute;left:1189px;top:259px;" width="14" height="14" viewBox="0 0 14 14"><path d="M12.5 1.5 L1.5 7 L12.5 12.5 M1.5 7 L12 7" fill="none" stroke="#d8d8d8" stroke-width="1.1"/></svg>
<svg style="position:absolute;left:1254px;top:163px;" width="11" height="12" viewBox="0 0 11 12"><path d="M3 5 V3.5 A2.5 2.5 0 0 1 8 3.5" fill="none" stroke="#dfe6ea" stroke-width="1.1" opacity="0.5"/><rect x="1.5" y="5" width="8" height="6" rx="1" fill="#e8eef0" opacity="0.5"/></svg>
<div class="t" style="left:1206px;top:258.35px;font-size:14px;color:#d6d6d6;font-weight:400;">Persp</div>
<svg style="position:absolute;left:960px;top:335px;" width="140" height="150" viewBox="0 0 140 150">
<defs><radialGradient id="ob" cx="0.5" cy="0.25" r="0.8"><stop offset="0" stop-color="#6c727b"/><stop offset="0.6" stop-color="#50555d"/><stop offset="1" stop-color="#3a3e44"/></radialGradient></defs>
<circle cx="43.5" cy="116" r="23.7" fill="url(#ob)" stroke="#f47a16" stroke-width="2.8"/>
<rect x="28.8" y="102" width="29.5" height="29.5" fill="none" stroke="#878c94" stroke-width="0.9"/>
<line x1="43.5" y1="116" x2="43" y2="34" stroke="#6fe04a" stroke-width="1.8"/>
<polygon points="42.6,8 34.5,36 51.5,36" fill="#62e02c"/>
<line x1="43.5" y1="116" x2="116.6" y2="100.4" stroke="#e0402a" stroke-width="1.8"/>
<polygon points="115,91.5 135,97.3 117,108" fill="#c21c12"/><ellipse cx="116" cy="99.8" rx="3" ry="8" transform="rotate(-12 116 99.8)" fill="#9c1810"/>
<line x1="43.5" y1="116" x2="12.5" y2="83.3" stroke="#3d5cf2" stroke-width="1.8"/>
<rect x="6" y="76.5" width="9" height="8.5" fill="#1d2fb5"/><circle cx="12.5" cy="83.3" r="6.2" fill="#3a4cf5"/>
</svg>
<div style="left:1135.5px;top:751px;width:147px;height:49px;background:#17181a;border-radius:5px;"></div>
<div style="left:1143px;top:760px;width:19px;height:1.2px;background:#8a8a8a;"></div>
<div style="left:1143px;top:763.5px;width:19px;height:1.2px;background:#8a8a8a;"></div>
<div class="t" style="left:1168px;top:753.65px;font-size:14px;color:#c8c8c8;font-weight:400;">MAGES</div>
<div style="left:1144px;top:772px;width:131.5px;height:22.5px;background:#585858;border-radius:3px;border:1px solid #444;"></div>
<div class="t" style="left:1153px;top:776.73px;font-size:14.5px;color:#e0e0e0;font-weight:400;">Edit SceneGraph</div>
<div style="left:1286.5px;top:87px;width:1.5px;height:717px;background:#191919;"></div>
<div style="left:1288px;top:87px;width:760px;height:23px;background:#282828;border-radius:5px 5px 0 0;"></div>
<div style="left:1288px;top:87px;width:121px;height:23px;background:#3c3c3c;border-radius:4px 4px 0 0;"></div>
<div class="t" style="left:1297px;top:92.24px;font-size:14.6px;color:#c4c4c4;font-weight:400;">MAGES Panel</div>
<svg style="position:absolute;left:2028px;top:91px;" width="6" height="14" viewBox="0 0 6 14"><circle cx="3" cy="2" r="1.6" fill="#c4c4c4"/><circle cx="3" cy="7" r="1.6" fill="#c4c4c4"/><circle cx="3" cy="12" r="1.6" fill="#c4c4c4"/></svg>
<div style="left:1288px;top:110px;width:73px;height:693.5px;background:#0a0a0a;"></div>
<div style="left:1361px;top:110px;width:687px;height:693.5px;background:#1f1f1f;"></div>
<div style="left:2044px;top:110px;width:4px;height:693.5px;background:#1b1b1b;"></div>
<div style="left:1337px;top:110.5px;width:24px;height:23.5px;background:#383838;"></div>
<svg style="position:absolute;left:1340px;top:113px;" width="18" height="18" viewBox="0 0 18 18"><path d="M2.5 2 L9 9 L2.5 16 M8.5 2 L15 9 L8.5 16" fill="none" stroke="#f2f2f2" stroke-width="1.5"/></svg>
<svg style="position:absolute;left:1305px;top:247px;" width="39" height="39" viewBox="0 0 39 39"><path d="M8 17 V33.5 Q8 36 10.5 36 H28.5 Q31 36 31 33.5 V17 H34.5 Q37 17 35.3 15.2 L21.2 1.8 Q19.5 0.3 17.8 1.8 L3.7 15.2 Q2 17 4.5 17 Z" fill="none" stroke="#f4f4f4" stroke-width="2" stroke-linejoin="round"/></svg>
<svg style="position:absolute;left:1306px;top:305px;" width="38" height="21" viewBox="0 0 38 21"><path d="M6 2 H32 Q35 2 35 5 V14.5 Q35 18 31.5 18 H24 Q22.5 18 21.8 16.5 Q21 14 19 14 Q17 14 16.2 16.5 Q15.5 18 14 18 H6.5 Q3 18 3 14.5 V5 Q3 2 6 2 Z" fill="none" stroke="#f4f4f4" stroke-width="1.8" stroke-linejoin="round"/><path d="M3 6.5 H1.5 Q0.8 6.5 0.8 7.5 V11.5 Q0.8 12.5 1.5 12.5 H3 M35 6.5 H36.5 Q37.2 6.5 37.2 7.5 V11.5 Q37.2 12.5 36.5 12.5 H35" fill="none" stroke="#f4f4f4" stroke-width="1.5"/></svg>
<div style="left:1289px;top:338.5px;width:72px;height:47.3px;background:#3c3c3c;border-radius:6px 0 0 6px;"></div>
<svg style="position:absolute;left:1305px;top:344px;" width="40" height="38" viewBox="0 0 40 38"><circle cx="16.6" cy="4.6" r="3.5" fill="none" stroke="#f4f4f4" stroke-width="1.5"/><circle cx="16.6" cy="18" r="3.5" fill="none" stroke="#f4f4f4" stroke-width="1.5"/><circle cx="16.6" cy="31.7" r="3.5" fill="none" stroke="#f4f4f4" stroke-width="1.5"/><path d="M20.1 5 H31.3 A6.3 6.3 0 0 1 31.3 17.6 H21" fill="none" stroke="#f4f4f4" stroke-width="1.5"/><polygon points="20.3,17.6 23.5,15.6 23.5,19.6" fill="#f4f4f4"/><path d="M13.1 18 H8 A6.8 6.8 0 0 0 8 31.6 H12" fill="none" stroke="#f4f4f4" stroke-width="1.5"/><polygon points="13,31.6 9.8,29.6 9.8,33.6" fill="#f4f4f4"/></svg>
<svg style="position:absolute;left:1306px;top:392px;" width="38" height="37" viewBox="0 0 38 37"><path d="M2 1 V35 H36.5" fill="none" stroke="#f4f4f4" stroke-width="1.8"/><path d="M5.2 30 L15.2 20 L21.2 28 L36.3 11.9" fill="none" stroke="#f4f4f4" stroke-width="1.8" stroke-linejoin="miter"/></svg>
<svg style="position:absolute;left:1309px;top:597px;" width="37" height="33" viewBox="0 0 37 33"><rect x="7" y="2" width="23" height="14.5" fill="none" stroke="#f4f4f4" stroke-width="1.3"/><path d="M14.5 7 L12 9.3 L14.5 11.6 M22.5 7 L25 9.3 L22.5 11.6 M19.8 5.8 L17.2 12.8" fill="none" stroke="#f4f4f4" stroke-width="1.1"/><path d="M2.5 23.5 L7.5 19.5 Q10 17.8 13 18.3 L20.5 19.5 Q23 20 22.3 22 Q21.8 23.3 19.5 23 L14.5 22.5 M21.8 22.2 L30 18.5 Q33.5 17.5 34.5 19.3 Q35 20.5 33.5 21.5 L22 29.5 Q20.5 30.5 18.5 30.3 L9 29.5 L6.5 31 Z" fill="none" stroke="#f4f4f4" stroke-width="1.3" stroke-linejoin="round"/></svg>
<svg style="position:absolute;left:1305px;top:640px;" width="40" height="40" viewBox="0 0 40 40"><path d="M16.04 6.14 L16.45 1.25 L22.55 1.25 L22.96 6.14 A13.8 13.8 0 0 1 26.50 7.61 L30.24 4.44 L34.56 8.76 L31.39 12.50 A13.8 13.8 0 0 1 32.86 16.04 L37.75 16.45 L37.75 22.55 L32.86 22.96 A13.8 13.8 0 0 1 31.39 26.50 L34.56 30.24 L30.24 34.56 L26.50 31.39 A13.8 13.8 0 0 1 22.96 32.86 L22.55 37.75 L16.45 37.75 L16.04 32.86 A13.8 13.8 0 0 1 12.50 31.39 L8.76 34.56 L4.44 30.24 L7.61 26.50 A13.8 13.8 0 0 1 6.14 22.96 L1.25 22.55 L1.25 16.45 L6.14 16.04 A13.8 13.8 0 0 1 7.61 12.50 L4.44 8.76 L8.76 4.44 L12.50 7.61 A13.8 13.8 0 0 1 16.04 6.14 Z" fill="none" stroke="#f4f4f4" stroke-width="1.6" stroke-linejoin="round"/><path d="M13.5 13 A6.5 6.5 0 0 0 17.5 24 L28 35.5 Q30 37.3 32 35.5 Q33.8 33.5 32 31.5 L21.8 20.8 A6.5 6.5 0 0 0 13.5 13 L13.8 17.5 L16.5 19.5 L19.5 17.5 L18.8 13.8 Z" fill="none" stroke="#f4f4f4" stroke-width="1.5" stroke-linejoin="round"/></svg>
<svg style="position:absolute;left:1305px;top:688px;" width="40" height="40" viewBox="0 0 40 40"><path d="M16.04 6.14 L16.45 1.25 L22.55 1.25 L22.96 6.14 A13.8 13.8 0 0 1 26.50 7.61 L30.24 4.44 L34.56 8.76 L31.39 12.50 A13.8 13.8 0 0 1 32.86 16.04 L37.75 16.45 L37.75 22.55 L32.86 22.96 A13.8 13.8 0 0 1 31.39 26.50 L34.56 30.24 L30.24 34.56 L26.50 31.39 A13.8 13.8 0 0 1 22.96 32.86 L22.55 37.75 L16.45 37.75 L16.04 32.86 A13.8 13.8 0 0 1 12.50 31.39 L8.76 34.56 L4.44 30.24 L7.61 26.50 A13.8 13.8 0 0 1 6.14 22.96 L1.25 22.55 L1.25 16.45 L6.14 16.04 A13.8 13.8 0 0 1 7.61 12.50 L4.44 8.76 L8.76 4.44 L12.50 7.61 A13.8 13.8 0 0 1 16.04 6.14 Z" fill="none" stroke="#f4f4f4" stroke-width="1.6" stroke-linejoin="round"/><circle cx="19.5" cy="19.5" r="7.2" fill="none" stroke="#f4f4f4" stroke-width="1.7"/></svg>
<svg style="position:absolute;left:1307px;top:738px;" width="36" height="36" viewBox="0 0 36 36"><circle cx="18" cy="18" r="18" fill="#d9d9d9"/></svg>
<div class="t" style="left:1025.3px;width:600px;text-align:center;top:746.79px;font-size:19.5px;color:#141414;font-weight:700;">PZ</div>
<div style="left:1377.5px;top:136px;width:359px;height:46.6px;background:#3c3c3c;border-radius:5px;"></div>
<div class="t" style="left:1402.7px;top:150.60px;font-size:20.2px;color:#e4e4e4;font-weight:400;">Empty Project</div>
<svg style="position:absolute;left:1699.0px;top:156.0px;" width="10" height="6" viewBox="0 0 10 6"><polygon points="0,0 10,0 5.0,6" fill="#d0d0d0"/></svg>
<div class="t" style="left:1374.8px;top:362.78px;font-size:24.6px;color:#dedede;font-weight:700;">Action Pattern Wizard</div>
<div style="left:1373.2px;top:401.5px;width:662.8px;height:390.3px;background:#050505;border-radius:3px;"></div>
<div style="left:1375.2px;top:403.2px;width:260.8px;height:386.5px;background:#3c3c3c;"></div>
<div style="left:1638.6px;top:403.2px;width:395.5px;height:386.5px;background:#3c3c3c;"></div>
<div style="left:1375.2px;top:403.2px;width:1px;height:386.5px;background:#454545;"></div>
<div style="left:1375.2px;top:788.7px;width:260.8px;height:1px;background:#444444;"></div>
<div style="left:1638.6px;top:403.2px;width:395.5px;height:1px;background:#444444;"></div>
<div style="left:2033.1px;top:403.2px;width:1px;height:386.5px;background:#464646;"></div>
<div style="left:1410.2px;top:469px;width:2.6px;height:25.5px;background:#8a8a8a;"></div>
<div style="left:1410.2px;top:529px;width:2.6px;height:25.5px;background:#8a8a8a;"></div>
<svg style="position:absolute;left:1392.5px;top:433.1px;" width="37" height="37" viewBox="0 0 37 37"><circle cx="18.5" cy="18.5" r="16.8" fill="#3c3c3c" stroke="#f0f0f0" stroke-width="2"/></svg>
<div class="t" style="left:1111.5px;width:600px;text-align:center;top:442.32px;font-size:19px;color:#e8e8e8;font-weight:400;">1</div>
<div class="t" style="left:1434.9px;top:442.25px;font-size:19.2px;color:#c8c8c8;font-weight:400;">Select Action Pattern</div>
<svg style="position:absolute;left:1392.5px;top:493.2px;" width="37" height="37" viewBox="0 0 37 37"><circle cx="18.5" cy="18.5" r="16.8" fill="#3c3c3c" stroke="#f0f0f0" stroke-width="2"/></svg>
<div class="t" style="left:1111.5px;width:600px;text-align:center;top:502.42px;font-size:19px;color:#e8e8e8;font-weight:400;">2</div>
<div class="t" style="left:1434.9px;top:502.35px;font-size:19.2px;color:#eeeeee;font-weight:400;">Setup Use Object</div>
<svg style="position:absolute;left:1392.5px;top:553.1px;" width="37" height="37" viewBox="0 0 37 37"><circle cx="18.5" cy="18.5" r="16.8" fill="#3c3c3c" stroke="#f0f0f0" stroke-width="2"/></svg>
<div class="t" style="left:1111.5px;width:600px;text-align:center;top:562.32px;font-size:19px;color:#e8e8e8;font-weight:400;">3</div>
<div class="t" style="left:1434.9px;top:562.25px;font-size:19.2px;color:#c8c8c8;font-weight:400;">Setup Use Collider</div>
<div class="t" style="left:1536px;width:600px;text-align:center;top:414.62px;font-size:19px;color:#f2f2f2;font-weight:700;">Action Wizard</div>
<div style="left:1638.6px;top:455px;width:25.5px;height:1.2px;background:#7a7a7a;"></div>
<div style="left:1816px;top:455px;width:217px;height:1.2px;background:#7a7a7a;"></div>
<div class="t" style="left:1664px;top:446.13px;font-size:19.1px;color:#ececec;font-weight:400;">Setup Use Object</div>
<div class="t" style="left:1645.3px;top:478.15px;font-size:19.2px;color:#cfcfcf;font-weight:400;">Choose or Create an Interactable Object</div>
<div style="left:1648.4px;top:502px;width:376px;height:21.5px;background:#585858;border-radius:3px;border-bottom:1px solid #2c2c2c;"></div>
<div class="t" style="left:1536px;width:600px;text-align:center;top:505.13px;font-size:15.2px;color:#dadada;font-weight:400;">Create New</div>
<div class="t" style="left:1645.3px;top:549.23px;font-size:19.1px;color:#cfcfcf;font-weight:400;">OR Select an existing prefab</div>
<div style="left:1647.5px;top:572.5px;width:378px;height:26px;background:#262626;border-radius:3px;border:1px solid #1e1e1e;"></div>
<div style="left:2002px;top:574px;width:22px;height:23px;background:#2e2e2e;"></div>
<svg style="position:absolute;left:1651px;top:577px;" width="15" height="16" viewBox="0 0 15 16"><path d="M7.5 1 L13.5 4.3 V11.3 L7.5 14.8 L1.5 11.3 V4.3 Z M1.5 4.3 L7.5 7.8 L13.5 4.3 M7.5 7.8 V14.8" fill="none" stroke="#b8b8b8" stroke-width="1.2" stroke-linejoin="round"/></svg>
<div class="t" style="left:1668.4px;top:576.83px;font-size:19.1px;color:#dedede;font-weight:400;">Collide the spheres_UseObject</div>
<svg style="position:absolute;left:2005px;top:578px;" width="16" height="16" viewBox="0 0 16 16"><circle cx="8" cy="8" r="6" fill="none" stroke="#d8d8d8" stroke-width="1.5"/><circle cx="8" cy="8" r="2.5" fill="#d8d8d8"/></svg>
<svg style="position:absolute;left:1662px;top:610px;" width="16" height="18" viewBox="0 0 16 18"><path d="M8 1.5 L15 16.5 H1 Z" fill="#f6c410" stroke="#f6c410" stroke-width="1.2" stroke-linejoin="round"/><rect x="7" y="6" width="2" height="6" fill="#3c3c3c"/><rect x="7" y="13" width="2" height="2" fill="#3c3c3c"/></svg>
<div class="t" style="left:1699.6px;top:611.75px;font-size:19.2px;color:#d2d2d2;font-weight:400;">Through the Unity Scene, move the</div>
<div class="t" style="left:1699.6px;top:633.25px;font-size:19.2px;color:#d2d2d2;font-weight:400;">object to the position you desire.</div>
<div style="left:1643.7px;top:746.8px;width:74.5px;height:21.5px;background:#585858;border-radius:3px;border-bottom:1px solid #2c2c2c;"></div>
<div class="t" style="left:1381px;width:600px;text-align:center;top:749.93px;font-size:15.2px;color:#dadada;font-weight:400;">Previous</div>
<div style="left:1971.3px;top:746.8px;width:48.5px;height:21.5px;background:#585858;border-radius:3px;border-bottom:1px solid #2c2c2c;"></div>
<div class="t" style="left:1695.5px;width:600px;text-align:center;top:749.93px;font-size:15.2px;color:#dadada;font-weight:400;">Next</div>
<div style="left:1636px;top:403px;width:2.6px;height:387.5px;background:#151515;"></div>
<div style="left:0px;top:803.5px;width:2048px;height:2.5px;background:#191919;"></div>
<div style="left:0px;top:806px;width:1360.5px;height:23px;background:#282828;border-radius:5px 5px 0 0;"></div>
<div style="left:0px;top:806px;width:96px;height:23px;background:#3c3c3c;border-radius:4px 4px 0 0;"></div>
<svg style="position:absolute;left:8px;top:812px;" width="15" height="13" viewBox="0 0 15 13"><path d="M0.5 1.5 Q0.5 0.5 1.5 0.5 H5.5 L7 2.2 H13.5 Q14.5 2.2 14.5 3.2 V11.5 Q14.5 12.5 13.5 12.5 H1.5 Q0.5 12.5 0.5 11.5 Z" fill="#d2d2d2"/></svg>
<div class="t" style="left:27.8px;top:811.30px;font-size:15px;color:#c4c4c4;font-weight:400;">Project</div>
<svg style="position:absolute;left:108.5px;top:811px;" width="13" height="14" viewBox="0 0 13 14"><rect x="0.5" y="0.5" width="12" height="13" rx="1" fill="#cfcfcf"/><rect x="2" y="2.5" width="8.5" height="1.6" fill="#555"/><rect x="2" y="5.5" width="6" height="1.6" fill="#555"/><rect x="2" y="8.5" width="8.5" height="1.6" fill="#555"/></svg>
<div class="t" style="left:127.5px;top:811.30px;font-size:15px;color:#c4c4c4;font-weight:400;">Console</div>
<svg style="position:absolute;left:1317px;top:810.5px;" width="12" height="14" viewBox="0 0 12 14"><path d="M8.5 7 V4 A2.7 2.7 0 0 0 3.2 3.6" fill="none" stroke="#c4c4c4" stroke-width="1.3"/><rect x="1.2" y="7.2" width="8.8" height="5.6" rx="0.8" fill="none" stroke="#c4c4c4" stroke-width="1.4"/></svg>
<svg style="position:absolute;left:1342px;top:810.5px;" width="6" height="14" viewBox="0 0 6 14"><circle cx="3" cy="2" r="1.6" fill="#c4c4c4"/><circle cx="3" cy="7" r="1.6" fill="#c4c4c4"/><circle cx="3" cy="12" r="1.6" fill="#c4c4c4"/></svg>
<div style="left:0px;top:829px;width:1360.5px;height:24px;background:#3c3c3c;"></div>
<svg style="position:absolute;left:7px;top:834px;" width="16" height="15" viewBox="0 0 16 15"><path d="M7.5 0.5 V14.5 M0.5 7.2 H14.5" stroke="#c4c4c4" stroke-width="1.6"/></svg>
<svg style="position:absolute;left:27.5px;top:838.75px;" width="9" height="5.5" viewBox="0 0 9 5.5"><polygon points="0,0 9,0 4.5,5.5" fill="#c4c4c4"/></svg>
<div style="left:802px;top:832px;width:380px;height:18.5px;background:#262626;border-radius:5px;border:1px solid #1c1c1c;"></div>
<svg style="position:absolute;left:807px;top:836.5px;" width="10" height="10" viewBox="0 0 10 10"><circle cx="4" cy="4" r="2.6" fill="none" stroke="#cfcfcf" stroke-width="1.4"/><path d="M6 6 L8.8 8.8" stroke="#cfcfcf" stroke-width="1.7"/></svg>
<div style="left:1162px;top:833px;width:19px;height:16.5px;background:#2c2c2c;border-radius:0 4px 4px 0;"></div>
<svg style="position:absolute;left:1164px;top:833.5px;" width="16" height="16" viewBox="0 0 16 16"><rect x="4.5" y="1.5" width="10" height="10" rx="2" fill="none" stroke="#bdbdbd" stroke-width="1.1"/><path d="M5.5 10.5 L11.5 4.5 M8.5 4.5 H11.5 V7.5" fill="none" stroke="#bdbdbd" stroke-width="1.1"/><rect x="1.5" y="9.5" width="4.5" height="4.5" fill="#2a2a2a" stroke="#bdbdbd" stroke-width="1.1"/></svg>
<div style="left:1188px;top:830px;width:28px;height:22.5px;background:#353535;"></div>
<div style="left:1218px;top:830px;width:29px;height:22.5px;background:#353535;"></div>
<div style="left:1249px;top:830px;width:29px;height:22.5px;background:#353535;"></div>
<div style="left:1280px;top:830px;width:30px;height:22.5px;background:#353535;"></div>
<div style="left:1312px;top:830px;width:48px;height:22.5px;background:#353535;"></div>
<svg style="position:absolute;left:1193px;top:832px;" width="18" height="18" viewBox="0 0 18 18"><rect x="2" y="2" width="6" height="6" fill="#cfcfcf"/><circle cx="5.3" cy="12.5" r="4.3" fill="#cfcfcf"/><polygon points="11.5,4 16,11 7,11" fill="#cfcfcf"/></svg>
<svg style="position:absolute;left:1223px;top:833px;" width="17" height="17" viewBox="0 0 17 17"><path d="M9 1.5 H15 V7.5 L7.5 15 L1.5 9 Z" fill="#cfcfcf"/><circle cx="12" cy="4.5" r="1.3" fill="#353535"/></svg>
<svg style="position:absolute;left:1254px;top:832px;" width="18" height="18" viewBox="0 0 18 18"><polygon points="5.5,1 12.5,1 17,5.5 17,12.5 12.5,17 5.5,17 1,12.5 1,5.5" fill="#d8d8d8"/><rect x="7.8" y="3.8" width="2.4" height="7" fill="#353535"/><rect x="7.8" y="12.2" width="2.4" height="2.4" fill="#353535"/></svg>
<svg style="position:absolute;left:1286px;top:833px;" width="17" height="16" viewBox="0 0 17 16"><polygon points="8.5,1 10.6,6 16,6.3 11.8,9.8 13.2,15 8.5,12.2 3.8,15 5.2,9.8 1,6.3 6.4,6" fill="#8a8a8a"/></svg>
<svg style="position:absolute;left:1316px;top:832px;" width="20" height="18" viewBox="0 0 20 18"><path d="M1.5 9 Q10 0.5 18.5 9 Q10 17.5 1.5 9 Z" fill="none" stroke="#cfcfcf" stroke-width="1.5"/><circle cx="10" cy="9" r="2.8" fill="none" stroke="#cfcfcf" stroke-width="1.4"/><path d="M3 16.5 L17 1.5" stroke="#cfcfcf" stroke-width="1.5"/></svg>
<div class="t" style="left:1337px;top:834.30px;font-size:15px;color:#c4c4c4;font-weight:400;">25</div>
<div style="left:0px;top:853px;width:1360.5px;height:2px;background:#232323;"></div>
<div style="left:0px;top:855px;width:233px;height:213px;background:#383838;"></div>
<div style="left:233px;top:855px;width:15.5px;height:213px;background:#313131;"></div>
<div style="left:235px;top:888px;width:11.5px;height:63px;background:#5e5e5e;border-radius:6px;"></div>
<svg style="position:absolute;left:236.5px;top:861px;" width="8" height="6" viewBox="0 0 8 6"><polygon points="0,6 4,0 8,6" fill="#c4c4c4"/></svg>
<svg style="position:absolute;left:236.5px;top:1055px;" width="8" height="6" viewBox="0 0 8 6"><polygon points="0,0 8,0 4,6" fill="#c4c4c4"/></svg>
<div style="left:248.5px;top:855px;width:1px;height:213px;background:#252525;"></div>
<svg style="position:absolute;left:37px;top:861px;" width="17" height="17" viewBox="0 0 17 17"><circle cx="6.5" cy="6.5" r="5" fill="none" stroke="#bdbdbd" stroke-width="1.4"/><path d="M10 10 L14.5 14.5" stroke="#bdbdbd" stroke-width="2"/></svg>
<div class="t" style="left:57.4px;top:859.80px;font-size:15px;color:#d2d2d2;font-weight:400;">All Prefabs</div>
<svg style="position:absolute;left:5.0px;top:900.75px;" width="10" height="8.5" viewBox="0 0 10 8.5"><polygon points="0,0 10,0 5.0,8.5" fill="#7a7a7a"/></svg>
<svg style="position:absolute;left:20.5px;top:897px;" width="18" height="14" viewBox="0 0 18 14"><path d="M0.8 2 Q0.8 0.8 2 0.8 H6.5 L8 2.5 H14.5 Q15.5 2.5 15.5 3.5 V5 H5 L0.8 13 Z" fill="#cfcfcf"/><path d="M5 6 H17.5 L13.5 13.2 H1 Z" fill="#cfcfcf"/></svg>
<div class="t" style="left:41.7px;top:896.88px;font-size:15.5px;color:#e0e0e0;font-weight:700;">Assets</div>
<svg style="position:absolute;left:21.7px;top:920.25px;" width="10" height="8.5" viewBox="0 0 10 8.5"><polygon points="0,0 10,0 5.0,8.5" fill="#7a7a7a"/></svg>
<svg style="position:absolute;left:37.6px;top:916.5px;" width="18" height="14" viewBox="0 0 18 14"><path d="M0.8 2 Q0.8 0.8 2 0.8 H6.5 L8 2.5 H14.5 Q15.5 2.5 15.5 3.5 V5 H5 L0.8 13 Z" fill="#cfcfcf"/><path d="M5 6 H17.5 L13.5 13.2 H1 Z" fill="#cfcfcf"/></svg>
<div class="t" style="left:57.4px;top:916.50px;font-size:15px;color:#d2d2d2;font-weight:400;">Resources</div>
<svg style="position:absolute;left:38.7px;top:939.25px;" width="10" height="8.5" viewBox="0 0 10 8.5"><polygon points="0,0 10,0 5.0,8.5" fill="#7a7a7a"/></svg>
<svg style="position:absolute;left:54.7px;top:935.5px;" width="18" height="14" viewBox="0 0 18 14"><path d="M0.8 2 Q0.8 0.8 2 0.8 H6.5 L8 2.5 H14.5 Q15.5 2.5 15.5 3.5 V5 H5 L0.8 13 Z" fill="#cfcfcf"/><path d="M5 6 H17.5 L13.5 13.2 H1 Z" fill="#cfcfcf"/></svg>
<div class="t" style="left:74.5px;top:936.00px;font-size:15px;color:#d2d2d2;font-weight:400;">Actions</div>
<div style="left:0px;top:953px;width:233px;height:19.6px;background:#4a4a4a;"></div>
<svg style="position:absolute;left:71.8px;top:955.5px;" width="16" height="13" viewBox="0 0 16 13"><path d="M0.5 1.5 Q0.5 0.5 1.5 0.5 H5.5 L7 2.2 H14 Q15 2.2 15 3.2 V11.5 Q15 12.5 14 12.5 H1.5 Q0.5 12.5 0.5 11.5 Z" fill="#cfcfcf"/></svg>
<div class="t" style="left:90.6px;top:954.80px;font-size:15px;color:#d2d2d2;font-weight:400;width:142px;overflow:hidden;">Insert the Cube in th</div>
<svg style="position:absolute;left:54.7px;top:975px;" width="16" height="13" viewBox="0 0 16 13"><path d="M0.5 1.5 Q0.5 0.5 1.5 0.5 H5.5 L7 2.2 H14 Q15 2.2 15 3.2 V11.5 Q15 12.5 14 12.5 H1.5 Q0.5 12.5 0.5 11.5 Z" fill="#cfcfcf"/></svg>
<div class="t" style="left:74.5px;top:974.30px;font-size:15px;color:#d2d2d2;font-weight:400;">MAGES</div>
<svg style="position:absolute;left:22.5px;top:995.05px;" width="9" height="10.5" viewBox="0 0 9 10.5"><polygon points="0,0 9,5.25 0,10.5" fill="#7a7a7a"/></svg>
<svg style="position:absolute;left:37.6px;top:993.3px;" width="16" height="13" viewBox="0 0 16 13"><path d="M0.5 1.5 Q0.5 0.5 1.5 0.5 H5.5 L7 2.2 H14 Q15 2.2 15 3.2 V11.5 Q15 12.5 14 12.5 H1.5 Q0.5 12.5 0.5 11.5 Z" fill="#cfcfcf"/></svg>
<div class="t" style="left:57.4px;top:992.60px;font-size:15px;color:#d2d2d2;font-weight:400;">Samples</div>
<svg style="position:absolute;left:37.6px;top:1012.55px;" width="16" height="13" viewBox="0 0 16 13"><path d="M0.5 1.5 Q0.5 0.5 1.5 0.5 H5.5 L7 2.2 H14 Q15 2.2 15 3.2 V11.5 Q15 12.5 14 12.5 H1.5 Q0.5 12.5 0.5 11.5 Z" fill="#cfcfcf"/></svg>
<div class="t" style="left:57.4px;top:1011.85px;font-size:15px;color:#d2d2d2;font-weight:400;">Settings</div>
<svg style="position:absolute;left:22.5px;top:1033.55px;" width="9" height="10.5" viewBox="0 0 9 10.5"><polygon points="0,0 9,5.25 0,10.5" fill="#7a7a7a"/></svg>
<svg style="position:absolute;left:37.6px;top:1031.8px;" width="16" height="13" viewBox="0 0 16 13"><path d="M0.5 1.5 Q0.5 0.5 1.5 0.5 H5.5 L7 2.2 H14 Q15 2.2 15 3.2 V11.5 Q15 12.5 14 12.5 H1.5 Q0.5 12.5 0.5 11.5 Z" fill="#cfcfcf"/></svg>
<div class="t" style="left:57.4px;top:1031.10px;font-size:15px;color:#d2d2d2;font-weight:400;">TextMesh Pro</div>
<svg style="position:absolute;left:22.5px;top:1052.8px;" width="9" height="10.5" viewBox="0 0 9 10.5"><polygon points="0,0 9,5.25 0,10.5" fill="#7a7a7a"/></svg>
<svg style="position:absolute;left:37.6px;top:1051.05px;" width="16" height="13" viewBox="0 0 16 13"><path d="M0.5 1.5 Q0.5 0.5 1.5 0.5 H5.5 L7 2.2 H14 Q15 2.2 15 3.2 V11.5 Q15 12.5 14 12.5 H1.5 Q0.5 12.5 0.5 11.5 Z" fill="#cfcfcf"/></svg>
<div class="t" style="left:57.4px;top:1050.35px;font-size:15px;color:#d2d2d2;font-weight:400;">XR</div>
<div style="left:249.5px;top:855px;width:1111.0px;height:24.5px;background:#3e3e3e;"></div>
<div style="left:249.5px;top:879.5px;width:1111.0px;height:164px;background:#333333;"></div>
<div style="left:249.5px;top:1043.3px;width:1111.0px;height:24.7px;background:#3e3e3e;"></div>
<div class="t" style="left:254.6px;top:859.80px;font-size:15px;color:#c8c8c8;font-weight:400;">Assets</div>
<svg style="position:absolute;left:306px;top:862px;" width="8" height="12" viewBox="0 0 8 12"><path d="M1.5 1.5 L6 6 L1.5 10.5" fill="none" stroke="#9a9a9a" stroke-width="1.3"/></svg>
<div class="t" style="left:320.6px;top:859.80px;font-size:15px;color:#c8c8c8;font-weight:400;">Resources</div>
<svg style="position:absolute;left:400px;top:862px;" width="8" height="12" viewBox="0 0 8 12"><path d="M1.5 1.5 L6 6 L1.5 10.5" fill="none" stroke="#9a9a9a" stroke-width="1.3"/></svg>
<div class="t" style="left:415.2px;top:859.80px;font-size:15px;color:#c8c8c8;font-weight:400;">Actions</div>
<svg style="position:absolute;left:473.5px;top:862px;" width="8" height="12" viewBox="0 0 8 12"><path d="M1.5 1.5 L6 6 L1.5 10.5" fill="none" stroke="#9a9a9a" stroke-width="1.3"/></svg>
<div class="t" style="left:488.7px;top:859.38px;font-size:15.5px;color:#dcdcdc;font-weight:700;">Insert the Cube in the right place</div>
<svg style="position:absolute;left:270.5px;top:895px;" width="50" height="54" viewBox="0 0 50 54"><polygon points="25,1.5 47.5,13.5 25,25 2.5,13.5" fill="#80d6fb"/><polygon points="1.5,16 23.2,27.5 23.2,52.5 1.5,40.5" fill="#80d6fb"/><polygon points="48.5,16 26.8,27.5 26.8,52.5 48.5,40.5" fill="#80d6fb"/></svg>
<svg style="position:absolute;left:345px;top:895px;" width="50" height="54" viewBox="0 0 50 54"><polygon points="25,1.5 47.5,13.5 25,25 2.5,13.5" fill="#80d6fb"/><polygon points="1.5,16 23.2,27.5 23.2,52.5 1.5,40.5" fill="#80d6fb"/><polygon points="48.5,16 26.8,27.5 26.8,52.5 48.5,40.5" fill="#80d6fb"/></svg>
<div class="t" style="left:-4px;width:600px;text-align:center;top:955.50px;font-size:13px;color:#d2d2d2;font-weight:400;">Insert t...</div>
<div class="t" style="left:70.5px;width:600px;text-align:center;top:955.50px;font-size:13px;color:#d2d2d2;font-weight:400;">Insert t...</div>
<div style="left:1275.5px;top:1054.5px;width:65px;height:1.5px;background:#6a6a6a;"></div>
<svg style="position:absolute;left:1297.5px;top:1048.5px;" width="13" height="13" viewBox="0 0 13 13"><circle cx="6.5" cy="6.5" r="6" fill="#9a9a9a"/></svg>
<div style="left:1360.5px;top:806px;width:2px;height:262px;background:#191919;"></div>
<div style="left:1362.5px;top:806px;width:685.5px;height:23px;background:#282828;border-radius:5px 5px 0 0;"></div>
<div style="left:1362.5px;top:806px;width:89.5px;height:23px;background:#3c3c3c;border-radius:4px 4px 0 0;"></div>
<svg style="position:absolute;left:1369.5px;top:812.5px;" width="18" height="11" viewBox="0 0 18 11"><path d="M4.5 0.8 H13.5 Q17.5 0.8 17.5 5.5 Q17.5 10.2 14 10.2 Q12.3 10.2 11.3 8.5 H6.7 Q5.7 10.2 4 10.2 Q0.5 10.2 0.5 5.5 Q0.5 0.8 4.5 0.8Z" fill="#d2d2d2"/><path d="M3 5.5 H7 M5 3.5 V7.5" stroke="#3c3c3c" stroke-width="1.3"/><circle cx="12" cy="4.3" r="1.1" fill="#3c3c3c"/><circle cx="14" cy="6.8" r="1.1" fill="#3c3c3c"/></svg>
<div class="t" style="left:1391.5px;top:811.30px;font-size:15px;color:#c4c4c4;font-weight:400;">Game</div>
<svg style="position:absolute;left:2028px;top:810.5px;" width="6" height="14" viewBox="0 0 6 14"><circle cx="3" cy="2" r="1.6" fill="#c4c4c4"/><circle cx="3" cy="7" r="1.6" fill="#c4c4c4"/><circle cx="3" cy="12" r="1.6" fill="#c4c4c4"/></svg>
<div style="left:1362.5px;top:829px;width:685.5px;height:26px;background:#252525;"></div>
<div style="left:1365px;top:829.5px;width:105.5px;height:24px;background:#383838;"></div>
<div class="t" style="left:1368.3px;top:834.35px;font-size:15.3px;color:#c8c8c8;font-weight:400;">Game</div>
<svg style="position:absolute;left:1456.0px;top:838.5px;" width="10" height="6" viewBox="0 0 10 6"><polygon points="0,0 10,0 5.0,6" fill="#c8c8c8"/></svg>
<div style="left:1472px;top:829.5px;width:101.79999999999995px;height:24px;background:#383838;"></div>
<div class="t" style="left:1483.4px;top:834.35px;font-size:15.3px;color:#c8c8c8;font-weight:400;">Display 1</div>
<svg style="position:absolute;left:1560.0px;top:838.5px;" width="10" height="6" viewBox="0 0 10 6"><polygon points="0,0 10,0 5.0,6" fill="#c8c8c8"/></svg>
<div style="left:1576px;top:829.5px;width:189.20000000000005px;height:24px;background:#383838;"></div>
<div class="t" style="left:1579.3px;top:834.35px;font-size:15.3px;color:#c8c8c8;font-weight:400;">Free Aspect</div>
<svg style="position:absolute;left:1751.0px;top:838.5px;" width="10" height="6" viewBox="0 0 10 6"><polygon points="0,0 10,0 5.0,6" fill="#c8c8c8"/></svg>
<div style="left:1767.3px;top:829.5px;width:147.70000000000005px;height:24px;background:#383838;"></div>
<div style="left:1917px;top:829.5px;width:129px;height:24px;background:#383838;"></div>
<div class="t" style="left:1920.4px;top:834.35px;font-size:15.3px;color:#c8c8c8;font-weight:400;">Play Focused</div>
<svg style="position:absolute;left:2031.5px;top:838.5px;" width="10" height="6" viewBox="0 0 10 6"><polygon points="0,0 10,0 5.0,6" fill="#c8c8c8"/></svg>
<div class="t" style="left:1774.8px;top:834.35px;font-size:15.3px;color:#c8c8c8;font-weight:400;">Scale</div>
<div style="left:1828px;top:841px;width:30px;height:1.5px;background:#6a6a6a;"></div>
<svg style="position:absolute;left:1821.5px;top:835px;" width="13" height="13" viewBox="0 0 13 13"><circle cx="6.5" cy="6.5" r="6.2" fill="#9a9a9a"/></svg>
<div class="t" style="left:1865.7px;top:834.35px;font-size:15.3px;color:#c8c8c8;font-weight:400;">1.5x</div>
<svg style="position:absolute;left:1363px;top:855px;" width="685" height="213" viewBox="0 0 685 213"><defs>
<linearGradient id="gsky" x1="0" y1="0" x2="0" y2="1"><stop offset="0" stop-color="#6a86b0"/><stop offset="0.4" stop-color="#84a0c5"/><stop offset="0.75" stop-color="#bcd6e6"/><stop offset="0.93" stop-color="#e0f5f8"/><stop offset="1" stop-color="#dceef1"/></linearGradient>
<linearGradient id="ggnd" x1="0" y1="0" x2="0" y2="1"><stop offset="0" stop-color="#8a8a89"/><stop offset="0.1" stop-color="#6f6965"/><stop offset="1" stop-color="#69625e"/></linearGradient>
<radialGradient id="grect" cx="0.5" cy="0.35" r="0.7"><stop offset="0" stop-color="#565d68"/><stop offset="1" stop-color="#4f555f"/></radialGradient>
</defs>
<linearGradient id="gband" x1="0" y1="0" x2="0" y2="1"><stop offset="0" stop-color="#dcecef"/><stop offset="1" stop-color="#9ea5a6"/></linearGradient>
<rect width="685" height="112" fill="url(#gsky)"/>
<rect y="110" width="685" height="18" fill="url(#gband)"/>
<path d="M0 127 Q342.5 101 685 127 V213 H0 Z" fill="url(#ggnd)"/>
<rect x="197.5" y="0" width="289.9000000000001" height="110.6" fill="url(#grect)"/>
</svg>
<div style="left:1362.5px;top:855px;width:1px;height:213px;background:#1e1e1e;"></div>
<div style="left:1921.7px;top:1070px;width:1px;height:22px;background:#242424;"></div>
<div style="left:1953px;top:1070px;width:1px;height:22px;background:#242424;"></div>
<div style="left:1983.6px;top:1070px;width:1px;height:22px;background:#242424;"></div>
<div style="left:2015.4px;top:1070px;width:1px;height:22px;background:#242424;"></div>
<svg style="position:absolute;left:1927px;top:1072px;" width="19" height="19" viewBox="0 0 19 19"><ellipse cx="9.5" cy="11.5" rx="5.2" ry="6.3" fill="#d2d2d2"/><ellipse cx="9.5" cy="4.8" rx="3" ry="2.5" fill="#d2d2d2"/><path d="M4.5 9 L1.5 7 M14.5 9 L17.5 7 M4.3 12.5 H1 M14.7 12.5 H18 M5 16 L2 18 M14 16 L17 18 M7.5 3 L6 0.8 M11.5 3 L13 0.8" stroke="#d2d2d2" stroke-width="1.4"/><path d="M1 1 L17.5 17.5" stroke="#191919" stroke-width="2.6"/><path d="M1.2 1.2 L17.5 17.5" stroke="#d2d2d2" stroke-width="1.2"/></svg>
<svg style="position:absolute;left:1958px;top:1072px;" width="20" height="19" viewBox="0 0 20 19"><ellipse cx="10" cy="4.5" rx="7" ry="3.3" fill="#d2d2d2"/><path d="M3 7.3 Q10 11.5 17 7.3 V9.8 Q10 14 3 9.8Z M3 12.3 Q10 16.5 17 12.3 V14.6 Q10 18.8 3 14.6Z" fill="#d2d2d2"/><path d="M1.5 1 L18.5 18.5" stroke="#191919" stroke-width="2.6"/><path d="M1.7 1.2 L18.5 18.5" stroke="#d2d2d2" stroke-width="1.2"/></svg>
<svg style="position:absolute;left:1989px;top:1072px;" width="20" height="19" viewBox="0 0 20 19"><path d="M3.5 6 A7.5 7.5 0 0 1 15.5 4.5 M16.5 13 A7.5 7.5 0 0 1 4.5 14.5" fill="none" stroke="#d2d2d2" stroke-width="1.6"/><polygon points="17.5,1.5 17,7 12.5,5" fill="#d2d2d2"/><polygon points="2.5,17.5 3,12 7.5,14" fill="#d2d2d2"/><circle cx="10" cy="8.8" r="3.2" fill="#d2d2d2"/><rect x="8.5" y="12" width="3" height="2.3" fill="#d2d2d2"/><path d="M1.5 1 L18.5 18.5" stroke="#191919" stroke-width="2.6"/><path d="M1.7 1.2 L18.5 18.5" stroke="#d2d2d2" stroke-width="1.2"/></svg>
<svg style="position:absolute;left:2022px;top:1072px;" width="19" height="19" viewBox="0 0 19 19"><circle cx="9.5" cy="9.5" r="8" fill="none" stroke="#d2d2d2" stroke-width="1.3"/><path d="M5.8 9.8 L8.5 12.3 L13.3 6.8" fill="none" stroke="#d2d2d2" stroke-width="1.8"/></svg>
</body></html>
